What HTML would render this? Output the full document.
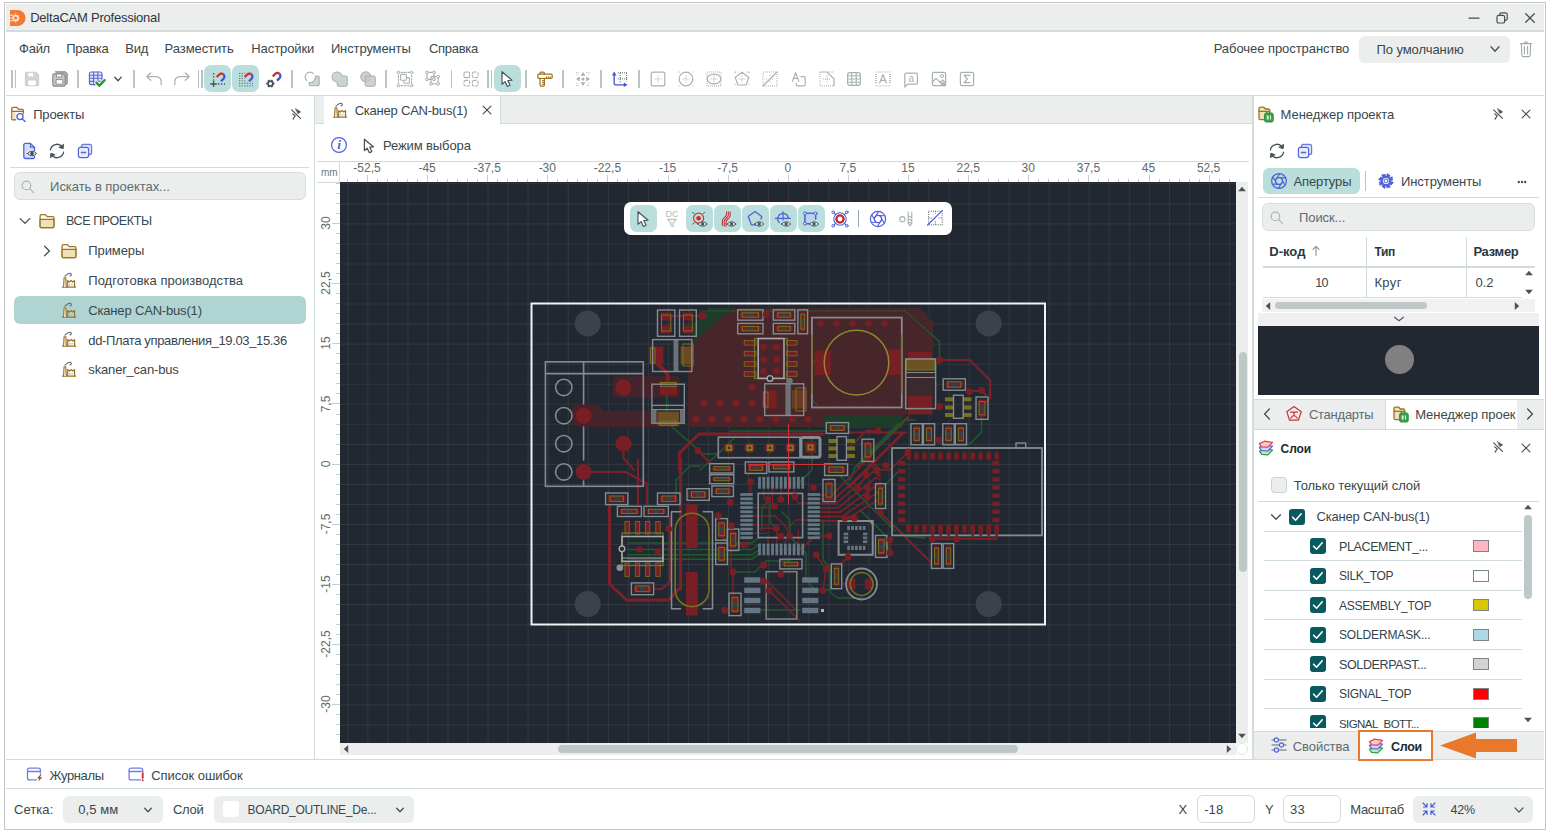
<!DOCTYPE html>
<html lang="ru"><head><meta charset="utf-8"><title>DeltaCAM Professional</title>
<style>
html,body{margin:0;padding:0}
body{width:1548px;height:835px;position:relative;overflow:hidden;background:#fff;font-family:"Liberation Sans",sans-serif;font-size:13px;color:#33424a}
.b{position:absolute;box-sizing:border-box;display:block}
.t{position:absolute;white-space:nowrap;line-height:20px;height:20px}
</style></head><body>

<div class="b" style="left:4px;top:2px;width:1542px;height:828px;background:#fff;border:1px solid #c6c6c6;"></div>
<div class="b" style="left:6px;top:4px;width:1538px;height:26px;background:#eceeed;"></div>
<div class="b" style="left:6px;top:30px;width:1538px;height:2px;background:#d3dcdb;"></div>
<span class="t" style="left:30.2px;top:8.1px;font-size:13px;color:#2b373d;font-weight:normal;letter-spacing:-0.228px;">DeltaCAM Professional</span>
<span class="t" style="left:19.1px;top:38.6px;font-size:13px;color:#38474d;font-weight:normal;letter-spacing:-0.29px;">Файл</span>
<span class="t" style="left:66.2px;top:38.6px;font-size:13px;color:#38474d;font-weight:normal;letter-spacing:-0.285px;">Правка</span>
<span class="t" style="left:125.3px;top:38.6px;font-size:13px;color:#38474d;font-weight:normal;letter-spacing:-0.273px;">Вид</span>
<span class="t" style="left:164.6px;top:38.6px;font-size:13px;color:#38474d;font-weight:normal;letter-spacing:-0.08px;">Разместить</span>
<span class="t" style="left:251.3px;top:38.6px;font-size:13px;color:#38474d;font-weight:normal;letter-spacing:-0.094px;">Настройки</span>
<span class="t" style="left:330.9px;top:38.6px;font-size:13px;color:#38474d;font-weight:normal;letter-spacing:-0.115px;">Инструменты</span>
<span class="t" style="left:429px;top:38.6px;font-size:13px;color:#38474d;font-weight:normal;letter-spacing:-0.299px;">Справка</span>
<span class="t" style="left:1213.7px;top:38.6px;font-size:13px;color:#38474d;font-weight:normal;letter-spacing:-0.057px;">Рабочее пространство</span>
<div class="b" style="left:1359px;top:36px;width:151px;height:27px;background:#eceeed;border-radius:6px;"></div>
<span class="t" style="left:1376.4px;top:39.6px;font-size:13px;color:#38474d;font-weight:normal;letter-spacing:-0.06px;">По умолчанию</span>
<div class="b" style="left:6px;top:95px;width:1538px;height:1px;background:#cfdcdb;"></div>
<div class="b" style="left:314px;top:96px;width:1px;height:663px;background:#cfdcdb;"></div>
<span class="t" style="left:33.2px;top:105.1px;font-size:13px;color:#38474d;font-weight:normal;letter-spacing:-0.166px;">Проекты</span>
<div class="b" style="left:10px;top:167px;width:299px;height:1px;background:#cfdcdb;"></div>
<div class="b" style="left:14px;top:172px;width:292px;height:28px;background:#eceeed;border:1px solid #d7dfde;border-radius:6px;"></div>
<span class="t" style="left:50.1px;top:176.6px;font-size:13px;color:#5d6b72;font-weight:normal;letter-spacing:-0.043px;">Искать в проектах...</span>
<div class="b" style="left:14px;top:296px;width:292px;height:28px;background:#afd4d2;border-radius:6px;"></div>
<span class="t" style="left:66px;top:211.1px;font-size:12.5px;color:#38474d;font-weight:normal;letter-spacing:-0.386px;">ВСЕ ПРОЕКТЫ</span>
<span class="t" style="left:88.3px;top:241.1px;font-size:13px;color:#38474d;font-weight:normal;letter-spacing:-0.097px;">Примеры</span>
<span class="t" style="left:88.3px;top:271.1px;font-size:13px;color:#38474d;font-weight:normal;letter-spacing:0.009px;">Подготовка производства</span>
<span class="t" style="left:88.3px;top:300.6px;font-size:13px;color:#38474d;font-weight:normal;letter-spacing:-0.174px;">Сканер CAN-bus(1)</span>
<span class="t" style="left:88.3px;top:330.6px;font-size:13px;color:#38474d;font-weight:normal;letter-spacing:-0.363px;">dd-Плата управления_19.03_15.36</span>
<span class="t" style="left:88.3px;top:360.1px;font-size:13px;color:#38474d;font-weight:normal;letter-spacing:-0.15px;">skaner_can-bus</span>
<div class="b" style="left:315px;top:96px;width:938px;height:28px;background:#eceeed;"></div>
<div class="b" style="left:315px;top:123px;width:938px;height:1px;background:#cfdcdb;"></div>
<div class="b" style="left:324px;top:96px;width:177px;height:28px;background:#fff;border-right:1px solid #cfdcdb;"></div>
<span class="t" style="left:354.7px;top:101.1px;font-size:13px;color:#38474d;font-weight:normal;letter-spacing:-0.222px;">Сканер CAN-bus(1)</span>
<span class="t" style="left:382.9px;top:135.6px;font-size:13px;color:#38474d;font-weight:normal;letter-spacing:-0.098px;">Режим выбора</span>
<div class="b" style="left:317px;top:161px;width:932px;height:1px;background:#cfdcdb;"></div>
<div class="b" style="left:339px;top:161px;width:1px;height:21px;background:#cfdcdb;"></div>
<div class="b" style="left:317px;top:182px;width:23px;height:1px;background:#cfdcdb;"></div>
<span class="t" style="left:321px;top:162.6px;font-size:10px;color:#6b777c;font-weight:normal;letter-spacing:0px;">mm</span>
<div class="b" style="left:340px;top:182px;width:896px;height:561px;background:#222831;"></div>
<div class="b" style="left:1236px;top:182px;width:12px;height:561px;background:#eceeed;"></div>
<div class="b" style="left:340px;top:743px;width:896px;height:12px;background:#eceeed;"></div>
<div class="b" style="left:1238.7px;top:352px;width:8px;height:220px;background:#bcc9c8;border-radius:4px;"></div>
<div class="b" style="left:558px;top:745.2px;width:460px;height:8px;background:#bcc9c8;border-radius:4px;"></div>
<div class="b" style="left:1252px;top:96px;width:2px;height:663px;background:#d3dddc;"></div>
<span class="t" style="left:1280.6px;top:105.1px;font-size:13px;color:#38474d;font-weight:normal;letter-spacing:-0.036px;">Менеджер проекта</span>
<div class="b" style="left:1263px;top:168px;width:97px;height:26px;background:#b9dedb;border-radius:6px;"></div>
<span class="t" style="left:1293.5px;top:171.6px;font-size:13px;color:#38474d;font-weight:normal;letter-spacing:-0.126px;">Апертуры</span>
<div class="b" style="left:1365px;top:171px;width:1px;height:20px;background:#b8c4c4;"></div>
<span class="t" style="left:1400.9px;top:171.6px;font-size:13px;color:#38474d;font-weight:normal;letter-spacing:-0.051px;">Инструменты</span>
<div class="b" style="left:1258px;top:197px;width:281px;height:1px;background:#cfdcdb;"></div>
<div class="b" style="left:1262px;top:203px;width:273px;height:28px;background:#eceeed;border:1px solid #d7dfde;border-radius:6px;"></div>
<span class="t" style="left:1299px;top:207.6px;font-size:13px;color:#5d6b72;font-weight:normal;letter-spacing:-0.083px;">Поиск...</span>
<span class="t" style="left:1269.3px;top:241.6px;font-size:13px;color:#2b373d;font-weight:bold;letter-spacing:0.006px;">D-код</span>
<span class="t" style="left:1374.4px;top:241.6px;font-size:12.0px;color:#2b373d;font-weight:bold;letter-spacing:-0.299px;">Тип</span>
<span class="t" style="left:1473.4px;top:241.6px;font-size:13px;color:#2b373d;font-weight:bold;letter-spacing:-0.286px;">Размер</span>
<div class="b" style="left:1366px;top:237px;width:1px;height:60px;background:#cfdcdb;"></div>
<div class="b" style="left:1466px;top:237px;width:1px;height:60px;background:#cfdcdb;"></div>
<div class="b" style="left:1263px;top:266px;width:272px;height:2px;background:#cfdcdb;"></div>
<div class="b" style="left:1263px;top:297px;width:259px;height:1px;background:#cfdcdb;"></div>
<span class="t" style="left:1315.2px;top:272.6px;font-size:12.5px;color:#38474d;font-weight:normal;letter-spacing:-0.6px;">10</span>
<span class="t" style="left:1374.4px;top:272.6px;font-size:13px;color:#38474d;font-weight:normal;letter-spacing:0.4px;">Круг</span>
<span class="t" style="left:1475.5px;top:272.6px;font-size:13px;color:#38474d;font-weight:normal;letter-spacing:0.009px;">0.2</span>
<div class="b" style="left:1262px;top:299px;width:273px;height:13px;background:#f1f1f1;"></div>
<div class="b" style="left:1275px;top:302px;width:152px;height:7px;background:#bec8c8;border-radius:4px;"></div>
<div class="b" style="left:1258px;top:313px;width:281px;height:13px;background:#efefef;"></div>
<div class="b" style="left:1258px;top:326px;width:281px;height:69px;background:#222831;"></div>
<div class="b" style="left:1385px;top:345px;width:29px;height:29px;background:#808080;border-radius:50%;"></div>
<div class="b" style="left:1254px;top:399px;width:290px;height:1px;background:#cfdcdb;"></div>
<div class="b" style="left:1254px;top:400px;width:290px;height:30px;background:#eceeed;"></div>
<div class="b" style="left:1385px;top:400px;width:132px;height:30px;background:#fff;border-left:1px solid #cfdcdb;"></div>
<span class="t" style="left:1308.9px;top:404.6px;font-size:13px;color:#5d6b72;font-weight:normal;letter-spacing:-0.24px;">Стандарты</span>
<span class="t" style="left:1415.2px;top:404.6px;font-size:13px;color:#38474d;font-weight:normal;letter-spacing:-0.057px;">Менеджер проек</span>
<div class="b" style="left:1518px;top:400px;width:26px;height:30px;background:#eceeed;"></div>
<div class="b" style="left:1254px;top:429px;width:290px;height:1px;background:#cfdcdb;"></div>
<span class="t" style="left:1280.6px;top:438.6px;font-size:12.0px;color:#1f2b30;font-weight:bold;letter-spacing:-0.084px;">Слои</span>
<div class="b" style="left:1271px;top:477px;width:16px;height:16px;background:#eceeed;border:1px solid #c9d4d3;border-radius:3.5px;"></div>
<span class="t" style="left:1293.8px;top:475.6px;font-size:13px;color:#38474d;font-weight:normal;letter-spacing:-0.075px;">Только текущий слой</span>
<div class="b" style="left:1258px;top:501px;width:281px;height:1px;background:#cfdcdb;"></div>
<span class="t" style="left:1316.6px;top:506.6px;font-size:13px;color:#38474d;font-weight:normal;letter-spacing:-0.204px;">Сканер CAN-bus(1)</span>
<div class="b" style="left:1258px;top:502px;width:281px;height:226px;overflow:hidden">
<div class="b" style="left:6px;top:29px;width:258px;height:1px;background:#cfdcdb"></div>
<div class="b" style="left:52px;top:36.0px;width:16px;height:16px;background:#085a5e;border-radius:3px"></div>
<svg class="b" style="left:52px;top:36.0px" width="16" height="16" viewBox="0 0 16 16" fill="none"><path d="M3.6 8.2l3 3 5.6-6.4" stroke="#fff" stroke-width="1.6" stroke-linecap="round" stroke-linejoin="round"/></svg>
<span class="t" style="left:81px;top:34.6px;font-size:12.5px;letter-spacing:-0.375px">PLACEMENT_...</span>
<div class="b" style="left:215px;top:38.0px;width:16px;height:12px;background:#ffb6c1;border:1px solid #7d8388"></div>
<div class="b" style="left:6px;top:58px;width:258px;height:1px;background:#cfdcdb"></div>
<div class="b" style="left:52px;top:65.5px;width:16px;height:16px;background:#085a5e;border-radius:3px"></div>
<svg class="b" style="left:52px;top:65.5px" width="16" height="16" viewBox="0 0 16 16" fill="none"><path d="M3.6 8.2l3 3 5.6-6.4" stroke="#fff" stroke-width="1.6" stroke-linecap="round" stroke-linejoin="round"/></svg>
<span class="t" style="left:81px;top:64.1px;font-size:12.0px;letter-spacing:-0.393px">SILK_TOP</span>
<div class="b" style="left:215px;top:67.5px;width:16px;height:12px;background:#ffffff;border:1px solid #7d8388"></div>
<div class="b" style="left:6px;top:88px;width:258px;height:1px;background:#cfdcdb"></div>
<div class="b" style="left:52px;top:95.0px;width:16px;height:16px;background:#085a5e;border-radius:3px"></div>
<svg class="b" style="left:52px;top:95.0px" width="16" height="16" viewBox="0 0 16 16" fill="none"><path d="M3.6 8.2l3 3 5.6-6.4" stroke="#fff" stroke-width="1.6" stroke-linecap="round" stroke-linejoin="round"/></svg>
<span class="t" style="left:81px;top:93.6px;font-size:12.0px;letter-spacing:-0.228px">ASSEMBLY_TOP</span>
<div class="b" style="left:215px;top:97.0px;width:16px;height:12px;background:#d9c800;border:1px solid #7d8388"></div>
<div class="b" style="left:6px;top:117px;width:258px;height:1px;background:#cfdcdb"></div>
<div class="b" style="left:52px;top:124.5px;width:16px;height:16px;background:#085a5e;border-radius:3px"></div>
<svg class="b" style="left:52px;top:124.5px" width="16" height="16" viewBox="0 0 16 16" fill="none"><path d="M3.6 8.2l3 3 5.6-6.4" stroke="#fff" stroke-width="1.6" stroke-linecap="round" stroke-linejoin="round"/></svg>
<span class="t" style="left:81px;top:123.1px;font-size:12.0px;letter-spacing:-0.143px">SOLDERMASK...</span>
<div class="b" style="left:215px;top:126.5px;width:16px;height:12px;background:#add8e6;border:1px solid #7d8388"></div>
<div class="b" style="left:6px;top:147px;width:258px;height:1px;background:#cfdcdb"></div>
<div class="b" style="left:52px;top:154.0px;width:16px;height:16px;background:#085a5e;border-radius:3px"></div>
<svg class="b" style="left:52px;top:154.0px" width="16" height="16" viewBox="0 0 16 16" fill="none"><path d="M3.6 8.2l3 3 5.6-6.4" stroke="#fff" stroke-width="1.6" stroke-linecap="round" stroke-linejoin="round"/></svg>
<span class="t" style="left:81px;top:152.6px;font-size:12.5px;letter-spacing:-0.366px">SOLDERPAST...</span>
<div class="b" style="left:215px;top:156.0px;width:16px;height:12px;background:#d3d3d3;border:1px solid #7d8388"></div>
<div class="b" style="left:6px;top:177px;width:258px;height:1px;background:#cfdcdb"></div>
<div class="b" style="left:52px;top:183.5px;width:16px;height:16px;background:#085a5e;border-radius:3px"></div>
<svg class="b" style="left:52px;top:183.5px" width="16" height="16" viewBox="0 0 16 16" fill="none"><path d="M3.6 8.2l3 3 5.6-6.4" stroke="#fff" stroke-width="1.6" stroke-linecap="round" stroke-linejoin="round"/></svg>
<span class="t" style="left:81px;top:182.1px;font-size:12.0px;letter-spacing:-0.284px">SIGNAL_TOP</span>
<div class="b" style="left:215px;top:185.5px;width:16px;height:12px;background:#ff0000;border:1px solid #7d8388"></div>
<div class="b" style="left:6px;top:206px;width:258px;height:1px;background:#cfdcdb"></div>
<div class="b" style="left:52px;top:213.0px;width:16px;height:16px;background:#085a5e;border-radius:3px"></div>
<svg class="b" style="left:52px;top:213.0px" width="16" height="16" viewBox="0 0 16 16" fill="none"><path d="M3.6 8.2l3 3 5.6-6.4" stroke="#fff" stroke-width="1.6" stroke-linecap="round" stroke-linejoin="round"/></svg>
<span class="t" style="left:81px;top:211.6px;font-size:11.5px;letter-spacing:-0.568px">SIGNAL_BOTT...</span>
<div class="b" style="left:215px;top:215.0px;width:16px;height:12px;background:#008000;border:1px solid #7d8388"></div>
</div>
<div class="b" style="left:1289px;top:509px;width:16px;height:16px;background:#085a5e;border-radius:3px;"></div>
<svg class="b" style="left:1289px;top:509px;" width="16" height="16" viewBox="0 0 16 16" fill="none"><path d="M3.6 8.2l3 3 5.6-6.4" stroke="#fff" stroke-width="1.6" stroke-linecap="round" stroke-linejoin="round"/></svg>
<div class="b" style="left:1524.4px;top:514.5px;width:7.6px;height:84px;background:#bcc9c8;border-radius:4px;"></div>
<div class="b" style="left:1254px;top:731px;width:290px;height:28px;background:#eceeed;border-top:1px solid #cfdcdb;"></div>
<span class="t" style="left:1292.8px;top:736.6px;font-size:13px;color:#5d6b72;font-weight:normal;letter-spacing:-0.073px;">Свойства</span>
<svg class="b" style="left:1438px;top:729px;" width="82" height="32" viewBox="0 0 82 32" fill="none"><path d="M2 16.5L38 3.5V10H79V23H38V29.5Z" fill="#e8792a"/></svg>
<div class="b" style="left:6px;top:759px;width:1538px;height:1px;background:#cfdcdb;"></div>
<div class="b" style="left:6px;top:788px;width:1538px;height:1px;background:#cfdcdb;"></div>
<span class="t" style="left:49.4px;top:765.6px;font-size:13px;color:#38474d;font-weight:normal;letter-spacing:-0.354px;">Журналы</span>
<span class="t" style="left:151.2px;top:765.6px;font-size:13px;color:#38474d;font-weight:normal;letter-spacing:-0.05px;">Список ошибок</span>
<span class="t" style="left:14.1px;top:799.6px;font-size:13px;color:#38474d;font-weight:normal;letter-spacing:0.041px;">Сетка:</span>
<div class="b" style="left:63px;top:796px;width:100px;height:27px;background:#eceeed;border-radius:6px;"></div>
<span class="t" style="left:78.3px;top:800.1px;font-size:13px;color:#38474d;font-weight:normal;letter-spacing:0.09px;">0,5 мм</span>
<span class="t" style="left:173px;top:799.6px;font-size:13px;color:#38474d;font-weight:normal;letter-spacing:-0.303px;">Слой</span>
<div class="b" style="left:214px;top:796px;width:200px;height:27px;background:#eceeed;border-radius:6px;"></div>
<div class="b" style="left:223px;top:801px;width:16px;height:16px;background:#fff;border-radius:3px;"></div>
<span class="t" style="left:247.6px;top:800.1px;font-size:12.0px;color:#38474d;font-weight:normal;letter-spacing:-0.241px;">BOARD_OUTLINE_De...</span>
<span class="t" style="left:1178.6px;top:799.6px;font-size:13px;color:#38474d;font-weight:normal;letter-spacing:0px;">X</span>
<div class="b" style="left:1197px;top:795px;width:58px;height:28px;background:#fff;border:1px solid #d3dcdb;border-radius:6px;"></div>
<span class="t" style="left:1204.2px;top:800.1px;font-size:13px;color:#38474d;font-weight:normal;letter-spacing:0.07px;">-18</span>
<span class="t" style="left:1264.9px;top:799.6px;font-size:13px;color:#38474d;font-weight:normal;letter-spacing:0px;">Y</span>
<div class="b" style="left:1283px;top:795px;width:58px;height:28px;background:#fff;border:1px solid #d3dcdb;border-radius:6px;"></div>
<span class="t" style="left:1290px;top:800.1px;font-size:13px;color:#38474d;font-weight:normal;letter-spacing:0.27px;">33</span>
<span class="t" style="left:1350.2px;top:799.6px;font-size:13px;color:#38474d;font-weight:normal;letter-spacing:-0.274px;">Масштаб</span>
<div class="b" style="left:1413px;top:796px;width:120px;height:27px;background:#eceeed;border-radius:6px;"></div>
<span class="t" style="left:1450.4px;top:800.1px;font-size:12.5px;color:#38474d;font-weight:normal;letter-spacing:-0.206px;">42%</span>
<svg class="b" style="left:340px;top:182px" width="896" height="561" viewBox="340 182 896 561" fill="none"><path d="M347.78 182V743M367.82 182V743M387.86 182V743M407.90 182V743M427.94 182V743M447.98 182V743M468.02 182V743M488.06 182V743M508.10 182V743M528.14 182V743M548.18 182V743M568.22 182V743M588.26 182V743M608.30 182V743M628.34 182V743M648.38 182V743M668.42 182V743M688.46 182V743M708.50 182V743M728.54 182V743M748.58 182V743M768.62 182V743M788.66 182V743M808.70 182V743M828.74 182V743M848.78 182V743M868.82 182V743M888.86 182V743M908.90 182V743M928.94 182V743M948.98 182V743M969.02 182V743M989.06 182V743M1009.10 182V743M1029.14 182V743M1049.18 182V743M1069.22 182V743M1089.26 182V743M1109.30 182V743M1129.34 182V743M1149.38 182V743M1169.42 182V743M1189.46 182V743M1209.50 182V743M1229.54 182V743" stroke="#fff" stroke-opacity="0.068" stroke-width="1.1"/>
<path d="M340 183.82H1236M340 203.86H1236M340 223.90H1236M340 243.94H1236M340 263.98H1236M340 284.02H1236M340 304.06H1236M340 324.10H1236M340 344.14H1236M340 364.18H1236M340 384.22H1236M340 404.26H1236M340 424.30H1236M340 444.34H1236M340 464.38H1236M340 484.42H1236M340 504.46H1236M340 524.50H1236M340 544.54H1236M340 564.58H1236M340 584.62H1236M340 604.66H1236M340 624.70H1236M340 644.74H1236M340 664.78H1236M340 684.82H1236M340 704.86H1236M340 724.90H1236" stroke="#fff" stroke-opacity="0.068" stroke-width="1.1"/>
<polygon points="709.0,308.0 732.0,308.0 692.0,345.0 692.0,326.0" fill="#1d3d2a"/>
<polygon points="688.0,346.0 692.0,344.0 732.0,308.0 920.0,308.0 933.0,321.0 933.0,352.0 905.0,352.0 905.0,415.0 823.0,415.0 823.0,427.0 688.0,427.0" fill="#46262a"/>
<rect x="823.0" y="415.0" width="80.0" height="13.0" fill="#1d3d2a"/>
<rect x="905.0" y="352.0" width="28.0" height="63.0" fill="#3a2a2e"/>
<rect x="612.7" y="376.2" width="66.8" height="21.6" fill="#44242a" rx="3"/>
<polygon points="572.0,408.0 578.0,404.0 596.0,404.0 604.0,411.0 680.0,411.0 680.0,427.0 578.0,427.0 572.0,423.0" fill="#44242a"/>
<circle cx="587.7" cy="323.4" r="13" fill="#3c424a"/>
<circle cx="988.7" cy="323.4" r="13" fill="#3c424a"/>
<circle cx="587.7" cy="604.0" r="13" fill="#3c424a"/>
<circle cx="988.7" cy="604.0" r="13" fill="#3c424a"/>
<polyline points="666.6,395.0 666.6,421.0 671.0,426.0 703.0,454.0 718.0,454.0" fill="none" stroke="#1f5a2c" stroke-width="1.5" stroke-linejoin="round" stroke-linecap="round"/>
<polyline points="931.0,334.0 939.5,342.0 939.5,357.0" fill="none" stroke="#1f5a2c" stroke-width="1.5" stroke-linejoin="round" stroke-linecap="round"/>
<polyline points="700.0,311.0 905.0,311.0 931.0,334.0" fill="none" stroke="#1f5a2c" stroke-width="1.2" stroke-linejoin="round" stroke-linecap="round"/>
<polyline points="981.5,417.0 981.5,432.0 970.0,444.0 940.0,444.0" fill="none" stroke="#1f5a2c" stroke-width="1.5" stroke-linejoin="round" stroke-linecap="round"/>
<polyline points="628.0,543.0 752.0,543.0 760.0,537.0" fill="none" stroke="#1f5a2c" stroke-width="1.5" stroke-linejoin="round" stroke-linecap="round"/>
<polyline points="628.0,549.5 752.0,549.5 760.0,543.5" fill="none" stroke="#1f5a2c" stroke-width="1.5" stroke-linejoin="round" stroke-linecap="round"/>
<polyline points="628.0,554.8 752.0,554.8 760.0,548.8" fill="none" stroke="#1f5a2c" stroke-width="1.5" stroke-linejoin="round" stroke-linecap="round"/>
<polyline points="628.0,559.2 752.0,559.2 760.0,553.2" fill="none" stroke="#1f5a2c" stroke-width="1.5" stroke-linejoin="round" stroke-linecap="round"/>
<polyline points="700.0,470.0 718.0,454.0 735.0,437.0" fill="none" stroke="#1f5a2c" stroke-width="1.5" stroke-linejoin="round" stroke-linecap="round"/>
<polyline points="676.0,500.0 676.0,480.0 690.0,466.0 700.0,466.0" fill="none" stroke="#1f5a2c" stroke-width="1.5" stroke-linejoin="round" stroke-linecap="round"/>
<polyline points="770.0,500.0 762.0,508.0 762.0,530.0" fill="none" stroke="#1f5a2c" stroke-width="1.5" stroke-linejoin="round" stroke-linecap="round"/>
<polyline points="789.0,536.0 806.0,553.0 806.0,580.0 815.0,590.0 830.0,590.0" fill="none" stroke="#1f5a2c" stroke-width="1.5" stroke-linejoin="round" stroke-linecap="round"/>
<polyline points="823.0,520.0 823.0,560.0 830.0,568.0 830.0,592.0 838.0,598.0 862.0,598.0" fill="none" stroke="#1f5a2c" stroke-width="1.5" stroke-linejoin="round" stroke-linecap="round"/>
<polyline points="860.0,510.0 885.0,535.0 885.0,545.0 892.0,552.0" fill="none" stroke="#1f5a2c" stroke-width="1.5" stroke-linejoin="round" stroke-linecap="round"/>
<polyline points="894.0,525.0 905.0,536.0 925.0,538.0" fill="none" stroke="#1f5a2c" stroke-width="1.5" stroke-linejoin="round" stroke-linecap="round"/>
<polyline points="840.0,476.0 860.0,496.0 875.0,511.0 895.0,531.0" fill="none" stroke="#1f5a2c" stroke-width="1.5" stroke-linejoin="round" stroke-linecap="round"/>
<polyline points="900.0,470.0 880.0,490.0" fill="none" stroke="#1f5a2c" stroke-width="1.5" stroke-linejoin="round" stroke-linecap="round"/>
<polyline points="733.0,572.0 755.0,572.0 766.0,561.0 790.0,561.0" fill="none" stroke="#1f5a2c" stroke-width="1.5" stroke-linejoin="round" stroke-linecap="round"/>
<polyline points="744.0,610.0 800.0,610.0" fill="none" stroke="#1f5a2c" stroke-width="1.5" stroke-linejoin="round" stroke-linecap="round"/>
<polyline points="812.0,436.0 812.0,470.0 800.0,482.0" fill="none" stroke="#1f5a2c" stroke-width="1.5" stroke-linejoin="round" stroke-linecap="round"/>
<polyline points="824.0,352.0 812.0,364.0 812.0,400.0 822.0,410.0" fill="none" stroke="#1f5a2c" stroke-width="1.5" stroke-linejoin="round" stroke-linecap="round"/>
<polyline points="679.5,470.0 679.5,452.8 699.0,434.0 824.0,434.0" fill="none" stroke="#7d2128" stroke-width="3" stroke-linejoin="round" stroke-linecap="round"/>
<polyline points="849.0,432.5 906.0,432.5" fill="none" stroke="#7d2128" stroke-width="2" stroke-linejoin="round" stroke-linecap="round"/>
<polyline points="730.0,431.0 826.0,431.0" fill="none" stroke="#1f5a2c" stroke-width="1.5" stroke-linejoin="round" stroke-linecap="round"/>
<polyline points="623.5,443.7 623.5,458.0 634.0,470.0" fill="none" stroke="#7d2128" stroke-width="2" stroke-linejoin="round" stroke-linecap="round"/>
<polyline points="591.0,472.0 625.6,472.0 647.0,483.7 647.0,506.0" fill="none" stroke="#7d2128" stroke-width="2" stroke-linejoin="round" stroke-linecap="round"/>
<polyline points="638.0,460.0 638.0,506.0" fill="none" stroke="#7d2128" stroke-width="2" stroke-linejoin="round" stroke-linecap="round"/>
<polyline points="680.6,460.0 680.6,589.0" fill="none" stroke="#7d2128" stroke-width="3" stroke-linejoin="round" stroke-linecap="round"/>
<polyline points="609.5,505.0 609.5,584.0 626.7,600.0 668.7,600.0 680.6,587.0" fill="none" stroke="#7d2128" stroke-width="3" stroke-linejoin="round" stroke-linecap="round"/>
<polyline points="653.6,589.0 662.0,589.0 669.8,581.8 669.8,516.5" fill="none" stroke="#7d2128" stroke-width="2" stroke-linejoin="round" stroke-linecap="round"/>
<polyline points="658.0,364.4 667.7,374.0 667.7,385.0" fill="none" stroke="#7d2128" stroke-width="4" stroke-linejoin="round" stroke-linecap="round"/>
<polyline points="697.8,450.6 710.0,463.0" fill="none" stroke="#7d2128" stroke-width="2" stroke-linejoin="round" stroke-linecap="round"/>
<polyline points="702.0,316.0 672.0,316.0" fill="none" stroke="#7d2128" stroke-width="2" stroke-linejoin="round" stroke-linecap="round"/>
<polyline points="939.5,360.0 969.7,360.0 990.2,380.5 990.2,398.0 984.0,404.0" fill="none" stroke="#7d2128" stroke-width="2" stroke-linejoin="round" stroke-linecap="round"/>
<polyline points="969.0,391.0 981.5,391.0 986.0,395.0" fill="none" stroke="#7d2128" stroke-width="2" stroke-linejoin="round" stroke-linecap="round"/>
<polyline points="908.0,417.0 858.0,467.0" fill="none" stroke="#7d2128" stroke-width="2.5" stroke-linejoin="round" stroke-linecap="round"/>
<polyline points="903.0,433.0 849.0,487.0" fill="none" stroke="#7d2128" stroke-width="2.5" stroke-linejoin="round" stroke-linecap="round"/>
<polyline points="915.0,420.0 905.0,420.0 862.0,463.0" fill="none" stroke="#1f5a2c" stroke-width="1.5" stroke-linejoin="round" stroke-linecap="round"/>
<polyline points="898.0,424.0 855.0,467.0 850.0,480.0" fill="none" stroke="#1f5a2c" stroke-width="1.5" stroke-linejoin="round" stroke-linecap="round"/>
<polyline points="878.0,431.0 866.0,431.0 851.0,446.0" fill="none" stroke="#7d2128" stroke-width="2" stroke-linejoin="round" stroke-linecap="round"/>
<polyline points="880.2,512.8 931.0,562.4" fill="none" stroke="#7d2128" stroke-width="2" stroke-linejoin="round" stroke-linecap="round"/>
<polyline points="931.0,538.7 996.6,538.7" fill="none" stroke="#7d2128" stroke-width="2" stroke-linejoin="round" stroke-linecap="round"/>
<polyline points="733.0,572.0 733.0,595.0" fill="none" stroke="#7d2128" stroke-width="1.5" stroke-linejoin="round" stroke-linecap="round"/>
<polyline points="731.0,526.0 731.0,572.0" fill="none" stroke="#7d2128" stroke-width="1.5" stroke-linejoin="round" stroke-linecap="round"/>
<polyline points="820.0,495.0 832.0,495.0 868.0,459.0 880.0,470.0" fill="none" stroke="#7d2128" stroke-width="1.7" stroke-linejoin="round" stroke-linecap="round"/>
<polyline points="820.0,499.3 834.0,499.3 870.5,465.3 880.0,473.0" fill="none" stroke="#7d2128" stroke-width="1.7" stroke-linejoin="round" stroke-linecap="round"/>
<polyline points="820.0,503.6 836.0,503.6 873.0,471.6 880.0,476.0" fill="none" stroke="#7d2128" stroke-width="1.7" stroke-linejoin="round" stroke-linecap="round"/>
<polyline points="820.0,507.9 838.0,507.9 875.5,477.9 880.0,479.0" fill="none" stroke="#7d2128" stroke-width="1.7" stroke-linejoin="round" stroke-linecap="round"/>
<polyline points="820.0,512.2 840.0,512.2 878.0,484.2 880.0,482.0" fill="none" stroke="#7d2128" stroke-width="1.7" stroke-linejoin="round" stroke-linecap="round"/>
<polyline points="820.0,516.5 842.0,516.5 880.5,490.5 880.0,485.0" fill="none" stroke="#7d2128" stroke-width="1.7" stroke-linejoin="round" stroke-linecap="round"/>
<polyline points="820.0,520.8 844.0,520.8 883.0,496.8 880.0,488.0" fill="none" stroke="#7d2128" stroke-width="1.7" stroke-linejoin="round" stroke-linecap="round"/>
<polyline points="744.2,545.0 730.0,545.0 722.0,537.0" fill="none" stroke="#7d2128" stroke-width="1.5" stroke-linejoin="round" stroke-linecap="round"/>
<polyline points="752.8,507.5 768.0,507.5" fill="none" stroke="#7d2128" stroke-width="1.3" stroke-linejoin="round" stroke-linecap="round"/>
<polyline points="752.8,516.0 775.0,516.0" fill="none" stroke="#7d2128" stroke-width="1.3" stroke-linejoin="round" stroke-linecap="round"/>
<polyline points="752.8,524.8 770.0,524.8" fill="none" stroke="#7d2128" stroke-width="1.3" stroke-linejoin="round" stroke-linecap="round"/>
<polyline points="752.8,533.4 766.0,533.4" fill="none" stroke="#7d2128" stroke-width="1.3" stroke-linejoin="round" stroke-linecap="round"/>
<polyline points="763.8,488.7 763.8,499.0" fill="none" stroke="#7d2128" stroke-width="1.3" stroke-linejoin="round" stroke-linecap="round"/>
<polyline points="772.5,488.7 772.5,504.0" fill="none" stroke="#7d2128" stroke-width="1.3" stroke-linejoin="round" stroke-linecap="round"/>
<polyline points="781.0,488.7 781.0,499.0" fill="none" stroke="#7d2128" stroke-width="1.3" stroke-linejoin="round" stroke-linecap="round"/>
<polyline points="794.0,488.7 794.0,496.0" fill="none" stroke="#7d2128" stroke-width="1.3" stroke-linejoin="round" stroke-linecap="round"/>
<polyline points="768.0,543.6 768.0,536.0" fill="none" stroke="#7d2128" stroke-width="1.3" stroke-linejoin="round" stroke-linecap="round"/>
<polyline points="776.8,543.6 776.8,529.0" fill="none" stroke="#7d2128" stroke-width="1.3" stroke-linejoin="round" stroke-linecap="round"/>
<polyline points="785.4,543.6 785.4,537.0" fill="none" stroke="#7d2128" stroke-width="1.3" stroke-linejoin="round" stroke-linecap="round"/>
<polyline points="798.4,543.6 798.4,530.0" fill="none" stroke="#7d2128" stroke-width="1.3" stroke-linejoin="round" stroke-linecap="round"/>
<polyline points="768.0,507.5 774.4,506.3" fill="none" stroke="#7d2128" stroke-width="1.3" stroke-linejoin="round" stroke-linecap="round"/>
<polyline points="775.0,516.0 786.0,527.0 789.5,535.9" fill="none" stroke="#7d2128" stroke-width="1.3" stroke-linejoin="round" stroke-linecap="round"/>
<polyline points="807.6,503.0 798.0,503.0 794.8,496.6" fill="none" stroke="#7d2128" stroke-width="1.3" stroke-linejoin="round" stroke-linecap="round"/>
<polyline points="807.6,520.0 796.0,520.0 790.0,526.0" fill="none" stroke="#7d2128" stroke-width="1.3" stroke-linejoin="round" stroke-linecap="round"/>
<polyline points="770.0,500.0 770.0,522.0 776.0,528.0" fill="none" stroke="#1f5a2c" stroke-width="1.4" stroke-linejoin="round" stroke-linecap="round"/>
<polyline points="782.0,512.0 790.0,520.0 790.0,534.0" fill="none" stroke="#1f5a2c" stroke-width="1.4" stroke-linejoin="round" stroke-linecap="round"/>
<polyline points="750.6,481.6 750.6,492.0" fill="none" stroke="#7d2128" stroke-width="1.5" stroke-linejoin="round" stroke-linecap="round"/>
<polyline points="776.5,528.3 760.0,528.3" fill="none" stroke="#7d2128" stroke-width="1.5" stroke-linejoin="round" stroke-linecap="round"/>
<polyline points="769.0,590.4 800.0,621.0" fill="none" stroke="#7d2128" stroke-width="1.5" stroke-linejoin="round" stroke-linecap="round"/>
<polyline points="766.0,580.0 796.0,610.0" fill="none" stroke="#7d2128" stroke-width="1.5" stroke-linejoin="round" stroke-linecap="round"/>
<polyline points="829.0,536.0 815.0,536.0 800.0,550.0 780.0,550.0" fill="none" stroke="#7d2128" stroke-width="1.5" stroke-linejoin="round" stroke-linecap="round"/>
<polyline points="816.0,555.0 826.0,569.0 823.0,590.0" fill="none" stroke="#7d2128" stroke-width="1.5" stroke-linejoin="round" stroke-linecap="round"/>
<polyline points="848.0,557.0 840.0,565.0 836.0,565.0" fill="none" stroke="#7d2128" stroke-width="1.5" stroke-linejoin="round" stroke-linecap="round"/>
<polyline points="841.7,584.0 846.0,584.0" fill="none" stroke="#7d2128" stroke-width="1.5" stroke-linejoin="round" stroke-linecap="round"/>
<polyline points="890.0,540.0 890.0,553.0" fill="none" stroke="#7d2128" stroke-width="1.5" stroke-linejoin="round" stroke-linecap="round"/>
<polyline points="844.7,518.2 854.4,518.2 862.0,522.0" fill="none" stroke="#7d2128" stroke-width="1.5" stroke-linejoin="round" stroke-linecap="round"/>
<polyline points="908.0,452.0 900.0,460.0 890.0,470.0 878.0,470.0" fill="none" stroke="#7d2128" stroke-width="1.5" stroke-linejoin="round" stroke-linecap="round"/>
<rect x="545.4" y="361.8" width="97.9" height="124.5" fill="none" stroke="#868b91" stroke-width="1.6"/>
<polyline points="545.4,373.6 643.3,373.6" fill="none" stroke="#868b91" stroke-width="1.6" stroke-linejoin="round" stroke-linecap="round"/>
<polyline points="583.6,361.8 583.6,404.0" fill="none" stroke="#868b91" stroke-width="1.6" stroke-linejoin="round" stroke-linecap="round"/>
<polyline points="583.6,427.0 583.6,460.0" fill="none" stroke="#868b91" stroke-width="1.6" stroke-linejoin="round" stroke-linecap="round"/>
<polyline points="583.6,481.0 583.6,486.0" fill="none" stroke="#868b91" stroke-width="1.6" stroke-linejoin="round" stroke-linecap="round"/>
<circle cx="563.8" cy="387.4" r="8.2" fill="none" stroke="#868b91" stroke-width="1.6"/>
<circle cx="563.8" cy="415.7" r="8.2" fill="none" stroke="#868b91" stroke-width="1.6"/>
<circle cx="563.8" cy="443.7" r="8.2" fill="none" stroke="#868b91" stroke-width="1.6"/>
<circle cx="563.8" cy="471.9" r="8.2" fill="none" stroke="#868b91" stroke-width="1.6"/>
<circle cx="623.5" cy="387.4" r="8" fill="#771f25"/>
<circle cx="583.6" cy="415.7" r="8" fill="#771f25"/>
<circle cx="623.5" cy="443.7" r="8" fill="#771f25"/>
<circle cx="583.6" cy="471.9" r="8" fill="#771f25"/>
<rect x="660.5" y="312.5" width="11.3" height="8.0" fill="#771f25"/>
<rect x="660.5" y="325.5" width="11.3" height="8.0" fill="#771f25"/>
<rect x="661.5" y="315.0" width="9.3" height="16.0" fill="none" stroke="#787021" stroke-width="1"/>
<rect x="657.5" y="310.0" width="17.3" height="26.3" fill="none" stroke="#868b91" stroke-width="1.4"/>
<rect x="682.5" y="312.5" width="10.8" height="8.0" fill="#771f25"/>
<rect x="682.5" y="325.5" width="10.8" height="8.0" fill="#771f25"/>
<rect x="683.5" y="315.0" width="8.8" height="16.0" fill="none" stroke="#787021" stroke-width="1"/>
<rect x="679.5" y="310.0" width="16.8" height="26.3" fill="none" stroke="#868b91" stroke-width="1.4"/>
<circle cx="702.2" cy="315.9" r="3.8" fill="#771f25"/>
<rect x="649.3" y="346.5" width="14.1" height="17.9" fill="#771f25"/>
<rect x="650.5" y="348.0" width="4.5" height="15.0" fill="none" stroke="#787021" stroke-width="1"/>
<rect x="680.6" y="346.5" width="12.9" height="17.9" fill="#6b4a22"/>
<rect x="683.0" y="344.0" width="10.0" height="22.0" fill="none" stroke="#787021" stroke-width="1"/>
<rect x="673.5" y="339.6" width="4.9" height="31.9" fill="#6d7177"/>
<rect x="652.6" y="339.6" width="39.2" height="31.9" fill="none" stroke="#868b91" stroke-width="1.4"/>
<rect x="659.7" y="381.6" width="17.3" height="13.4" fill="#771f25"/>
<rect x="660.5" y="382.5" width="15.5" height="4.0" fill="none" stroke="#787021" stroke-width="1"/>
<rect x="657.5" y="411.8" width="21.5" height="14.0" fill="#6e4f24"/>
<rect x="660.5" y="421.0" width="15.5" height="4.5" fill="none" stroke="#787021" stroke-width="1"/>
<rect x="651.9" y="384.2" width="32.4" height="39.0" fill="none" stroke="#868b91" stroke-width="1.4"/>
<polyline points="652.0,405.3 684.0,405.3" fill="none" stroke="#868b91" stroke-width="1.2" stroke-linejoin="round" stroke-linecap="round"/>
<polyline points="652.0,409.6 684.0,409.6" fill="none" stroke="#868b91" stroke-width="1.2" stroke-linejoin="round" stroke-linecap="round"/>
<rect x="652.0" y="410.0" width="4.5" height="13.0" fill="#6d7177"/>
<rect x="680.0" y="410.0" width="4.3" height="13.0" fill="#6d7177"/>
<rect x="740.7" y="312.8" width="19.3" height="4.4" fill="#3a3f46"/>
<rect x="740.2" y="312.3" width="6.8" height="5.4" fill="#771f25"/>
<rect x="753.7" y="312.3" width="6.8" height="5.4" fill="#771f25"/>
<rect x="742.2" y="312.8" width="16.3" height="4.4" fill="none" stroke="#787021" stroke-width="1"/>
<rect x="737.7" y="309.8" width="25.3" height="10.4" fill="none" stroke="#868b91" stroke-width="1.4"/>
<rect x="740.7" y="326.4" width="19.3" height="4.4" fill="#3a3f46"/>
<rect x="740.2" y="325.9" width="6.8" height="5.4" fill="#771f25"/>
<rect x="753.7" y="325.9" width="6.8" height="5.4" fill="#771f25"/>
<rect x="742.2" y="326.4" width="16.3" height="4.4" fill="none" stroke="#787021" stroke-width="1"/>
<rect x="737.7" y="323.4" width="25.3" height="10.4" fill="none" stroke="#868b91" stroke-width="1.4"/>
<rect x="776.3" y="312.8" width="15.5" height="4.4" fill="#3a3f46"/>
<rect x="775.8" y="312.3" width="5.8" height="5.4" fill="#771f25"/>
<rect x="786.5" y="312.3" width="5.8" height="5.4" fill="#771f25"/>
<rect x="777.8" y="312.8" width="12.5" height="4.4" fill="none" stroke="#787021" stroke-width="1"/>
<rect x="773.3" y="309.8" width="21.5" height="10.4" fill="none" stroke="#868b91" stroke-width="1.4"/>
<rect x="776.3" y="326.4" width="15.5" height="4.4" fill="#3a3f46"/>
<rect x="775.8" y="325.9" width="5.8" height="5.4" fill="#771f25"/>
<rect x="786.5" y="325.9" width="5.8" height="5.4" fill="#771f25"/>
<rect x="777.8" y="326.4" width="12.5" height="4.4" fill="none" stroke="#787021" stroke-width="1"/>
<rect x="773.3" y="323.4" width="21.5" height="10.4" fill="none" stroke="#868b91" stroke-width="1.4"/>
<rect x="800.9" y="312.8" width="3.7" height="18.0" fill="#3a3f46"/>
<rect x="800.4" y="312.3" width="4.7" height="6.5" fill="#771f25"/>
<rect x="800.4" y="324.8" width="4.7" height="6.5" fill="#771f25"/>
<rect x="800.9" y="314.3" width="3.7" height="15.0" fill="none" stroke="#787021" stroke-width="1"/>
<rect x="797.9" y="309.8" width="9.7" height="24.0" fill="none" stroke="#868b91" stroke-width="1.4"/>
<circle cx="766.0" cy="314.6" r="3.3" fill="#771f25"/>
<rect x="744.2" y="340.5" width="11.8" height="4.6" fill="#771f25" stroke="#787021" stroke-width="0.8"/>
<rect x="786.5" y="340.5" width="10.5" height="4.6" fill="#771f25" stroke="#787021" stroke-width="0.8"/>
<rect x="744.2" y="351.3" width="11.8" height="4.6" fill="#771f25" stroke="#787021" stroke-width="0.8"/>
<rect x="786.5" y="351.3" width="10.5" height="4.6" fill="#771f25" stroke="#787021" stroke-width="0.8"/>
<rect x="744.2" y="361.7" width="11.8" height="4.6" fill="#771f25" stroke="#787021" stroke-width="0.8"/>
<rect x="786.5" y="361.7" width="10.5" height="4.6" fill="#771f25" stroke="#787021" stroke-width="0.8"/>
<rect x="744.2" y="371.7" width="11.8" height="4.6" fill="#771f25" stroke="#787021" stroke-width="0.8"/>
<rect x="786.5" y="371.7" width="10.5" height="4.6" fill="#771f25" stroke="#787021" stroke-width="0.8"/>
<rect x="754.5" y="338.5" width="32.8" height="39.9" fill="none" stroke="#787021" stroke-width="1.2"/>
<rect x="758.2" y="338.5" width="25.8" height="39.9" fill="none" stroke="#a5a8ac" stroke-width="1.6"/>
<circle cx="763.6" cy="347.0" r="3.4" fill="#771f25"/>
<circle cx="763.6" cy="359.6" r="3.4" fill="#771f25"/>
<circle cx="763.6" cy="371.5" r="3.4" fill="#771f25"/>
<circle cx="776.5" cy="347.0" r="3.4" fill="#771f25"/>
<circle cx="776.5" cy="359.6" r="3.4" fill="#771f25"/>
<circle cx="776.5" cy="371.5" r="3.4" fill="#771f25"/>
<circle cx="770.0" cy="378.4" r="2.8" fill="#222831" stroke="#a5a8ac" stroke-width="1.4"/>
<rect x="762.5" y="390.2" width="14.0" height="18.4" fill="#771f25"/>
<rect x="763.5" y="392.0" width="4.5" height="15.0" fill="none" stroke="#787021" stroke-width="1"/>
<rect x="791.9" y="390.2" width="14.0" height="18.4" fill="#6b3a24"/>
<rect x="796.0" y="388.0" width="10.0" height="23.0" fill="none" stroke="#787021" stroke-width="1"/>
<rect x="785.4" y="383.8" width="5.4" height="31.7" fill="#6d7177"/>
<rect x="764.7" y="383.8" width="39.0" height="31.7" fill="none" stroke="#868b91" stroke-width="1.4"/>
<circle cx="789.5" cy="381.0" r="3.3" fill="#70757b"/>
<circle cx="703.7" cy="403.2" r="3.4" fill="#771f25"/>
<circle cx="719.8" cy="403.2" r="3.4" fill="#771f25"/>
<circle cx="736.0" cy="403.2" r="3.4" fill="#771f25"/>
<circle cx="752.2" cy="403.2" r="3.4" fill="#771f25"/>
<circle cx="695.7" cy="419.3" r="3.4" fill="#771f25"/>
<circle cx="711.9" cy="419.3" r="3.4" fill="#771f25"/>
<circle cx="728.0" cy="419.3" r="3.4" fill="#771f25"/>
<circle cx="744.2" cy="419.3" r="3.4" fill="#771f25"/>
<circle cx="760.0" cy="419.3" r="3.4" fill="#771f25"/>
<circle cx="776.0" cy="419.3" r="3.4" fill="#771f25"/>
<circle cx="792.5" cy="419.3" r="3.4" fill="#771f25"/>
<circle cx="808.0" cy="419.3" r="3.4" fill="#771f25"/>
<circle cx="752.2" cy="387.4" r="3.4" fill="#771f25"/>
<circle cx="697.8" cy="450.6" r="3.5" fill="#771f25"/>
<rect x="814.5" y="350.4" width="16.2" height="24.6" fill="#771f25"/>
<rect x="887.8" y="349.3" width="12.9" height="25.7" fill="#771f25"/>
<circle cx="820.5" cy="323.4" r="3.2" fill="#771f25"/>
<circle cx="820.5" cy="407.5" r="3.2" fill="#5a2328"/>
<circle cx="836.5" cy="323.4" r="3.2" fill="#771f25"/>
<circle cx="836.5" cy="407.5" r="3.2" fill="#5a2328"/>
<circle cx="852.4" cy="323.4" r="3.2" fill="#771f25"/>
<circle cx="852.4" cy="407.5" r="3.2" fill="#5a2328"/>
<circle cx="868.4" cy="323.4" r="3.2" fill="#771f25"/>
<circle cx="868.4" cy="407.5" r="3.2" fill="#5a2328"/>
<circle cx="884.5" cy="323.4" r="3.2" fill="#771f25"/>
<circle cx="884.5" cy="407.5" r="3.2" fill="#5a2328"/>
<rect x="811.9" y="317.6" width="89.9" height="89.9" fill="none" stroke="#868b91" stroke-width="1.8"/>
<polyline points="812.0,335.0 812.0,393.0" fill="none" stroke="#787021" stroke-width="1.4" stroke-linejoin="round" stroke-linecap="round"/>
<polyline points="901.8,335.0 901.8,393.0" fill="none" stroke="#787021" stroke-width="1.4" stroke-linejoin="round" stroke-linecap="round"/>
<circle cx="856.5" cy="362.6" r="32.3" fill="none" stroke="#8f8a2a" stroke-width="1.5"/>
<rect x="908.0" y="352.0" width="24.0" height="14.0" fill="#771f25"/>
<rect x="908.0" y="396.0" width="24.0" height="18.0" fill="#771f25"/>
<rect x="906.5" y="359.0" width="28.5" height="11.0" fill="#6e5322" stroke="#787021" stroke-width="1"/>
<rect x="905.7" y="359.0" width="29.9" height="49.6" fill="none" stroke="#868b91" stroke-width="1.5"/>
<polyline points="906.0,372.5 935.0,372.5" fill="none" stroke="#868b91" stroke-width="1.2" stroke-linejoin="round" stroke-linecap="round"/>
<polyline points="906.0,377.5 935.0,377.5" fill="none" stroke="#868b91" stroke-width="1.2" stroke-linejoin="round" stroke-linecap="round"/>
<circle cx="939.5" cy="360.0" r="3.5" fill="#771f25"/>
<circle cx="939.5" cy="406.4" r="3.5" fill="#771f25"/>
<rect x="946.2" y="381.8" width="16.2" height="5.4" fill="#3a3f46"/>
<rect x="945.7" y="381.3" width="6.0" height="6.4" fill="#771f25"/>
<rect x="956.9" y="381.3" width="6.0" height="6.4" fill="#771f25"/>
<rect x="947.7" y="381.8" width="13.2" height="5.4" fill="none" stroke="#787021" stroke-width="1"/>
<rect x="943.2" y="378.8" width="22.2" height="11.4" fill="none" stroke="#868b91" stroke-width="1.4"/>
<rect x="945.0" y="397.3" width="8.5" height="4.0" fill="#787021"/>
<rect x="963.0" y="397.3" width="8.5" height="4.0" fill="#787021"/>
<rect x="945.0" y="405.5" width="8.5" height="4.0" fill="#787021"/>
<rect x="963.0" y="405.5" width="8.5" height="4.0" fill="#787021"/>
<rect x="945.0" y="413.0" width="8.5" height="4.0" fill="#787021"/>
<rect x="963.0" y="413.0" width="8.5" height="4.0" fill="#787021"/>
<rect x="953.5" y="395.2" width="9.7" height="23.1" fill="none" stroke="#868b91" stroke-width="1.4"/>
<rect x="979.0" y="400.0" width="6.0" height="16.3" fill="#3a3f46"/>
<rect x="978.5" y="399.5" width="7.0" height="6.0" fill="#771f25"/>
<rect x="978.5" y="410.8" width="7.0" height="6.0" fill="#771f25"/>
<rect x="979.0" y="401.5" width="6.0" height="13.3" fill="none" stroke="#787021" stroke-width="1"/>
<rect x="976.0" y="397.0" width="12.0" height="22.3" fill="none" stroke="#868b91" stroke-width="1.4"/>
<circle cx="969.3" cy="391.3" r="3.4" fill="#771f25"/>
<circle cx="981.5" cy="390.2" r="3.4" fill="#771f25"/>
<rect x="829.3" y="425.6" width="16.2" height="4.8" fill="#3a3f46"/>
<rect x="828.8" y="425.1" width="6.0" height="5.8" fill="#771f25"/>
<rect x="840.0" y="425.1" width="6.0" height="5.8" fill="#771f25"/>
<rect x="830.8" y="425.6" width="13.2" height="4.8" fill="none" stroke="#787021" stroke-width="1"/>
<rect x="826.3" y="422.6" width="22.2" height="10.8" fill="none" stroke="#868b91" stroke-width="1.4"/>
<rect x="828.5" y="439.0" width="8.5" height="4.0" fill="#787021"/>
<rect x="846.5" y="439.0" width="8.5" height="4.0" fill="#787021"/>
<rect x="828.5" y="446.5" width="8.5" height="4.0" fill="#787021"/>
<rect x="846.5" y="446.5" width="8.5" height="4.0" fill="#787021"/>
<rect x="828.5" y="454.0" width="8.5" height="4.0" fill="#787021"/>
<rect x="846.5" y="454.0" width="8.5" height="4.0" fill="#787021"/>
<rect x="837.0" y="436.6" width="9.4" height="23.7" fill="none" stroke="#868b91" stroke-width="1.4"/>
<rect x="865.0" y="442.2" width="5.8" height="16.2" fill="#3a3f46"/>
<rect x="864.5" y="441.7" width="6.8" height="6.0" fill="#771f25"/>
<rect x="864.5" y="452.9" width="6.8" height="6.0" fill="#771f25"/>
<rect x="865.0" y="443.7" width="5.8" height="13.2" fill="none" stroke="#787021" stroke-width="1"/>
<rect x="862.0" y="439.2" width="11.8" height="22.2" fill="none" stroke="#868b91" stroke-width="1.4"/>
<rect x="914.0" y="426.7" width="5.3" height="15.1" fill="#3a3f46"/>
<rect x="913.5" y="426.2" width="6.3" height="5.7" fill="#771f25"/>
<rect x="913.5" y="436.6" width="6.3" height="5.7" fill="#771f25"/>
<rect x="914.0" y="428.2" width="5.3" height="12.1" fill="none" stroke="#787021" stroke-width="1"/>
<rect x="911.0" y="423.7" width="11.3" height="21.1" fill="none" stroke="#868b91" stroke-width="1.4"/>
<rect x="926.4" y="426.7" width="5.2" height="15.1" fill="#3a3f46"/>
<rect x="925.9" y="426.2" width="6.2" height="5.7" fill="#771f25"/>
<rect x="925.9" y="436.6" width="6.2" height="5.7" fill="#771f25"/>
<rect x="926.4" y="428.2" width="5.2" height="12.1" fill="none" stroke="#787021" stroke-width="1"/>
<rect x="923.4" y="423.7" width="11.2" height="21.1" fill="none" stroke="#868b91" stroke-width="1.4"/>
<rect x="945.8" y="426.7" width="5.4" height="15.1" fill="#3a3f46"/>
<rect x="945.3" y="426.2" width="6.4" height="5.7" fill="#771f25"/>
<rect x="945.3" y="436.6" width="6.4" height="5.7" fill="#771f25"/>
<rect x="945.8" y="428.2" width="5.4" height="12.1" fill="none" stroke="#787021" stroke-width="1"/>
<rect x="942.8" y="423.7" width="11.4" height="21.1" fill="none" stroke="#868b91" stroke-width="1.4"/>
<rect x="958.3" y="426.7" width="5.2" height="15.1" fill="#3a3f46"/>
<rect x="957.8" y="426.2" width="6.2" height="5.7" fill="#771f25"/>
<rect x="957.8" y="436.6" width="6.2" height="5.7" fill="#771f25"/>
<rect x="958.3" y="428.2" width="5.2" height="12.1" fill="none" stroke="#787021" stroke-width="1"/>
<rect x="955.3" y="423.7" width="11.2" height="21.1" fill="none" stroke="#868b91" stroke-width="1.4"/>
<circle cx="878.0" cy="431.0" r="3.4" fill="#771f25"/>
<circle cx="938.5" cy="440.0" r="3.4" fill="#771f25"/>
<rect x="718.3" y="437.2" width="81.7" height="20.5" fill="none" stroke="#868b91" stroke-width="1.6"/>
<circle cx="729.0" cy="447.8" r="5.4" fill="#771f25"/>
<rect x="725.8" y="444.6" width="6.4" height="6.4" fill="#84741f"/>
<rect x="727.9" y="446.7" width="2.2" height="2.2" fill="#3a2a22"/>
<circle cx="749.6" cy="447.8" r="5.4" fill="#771f25"/>
<rect x="746.4" y="444.6" width="6.4" height="6.4" fill="#84741f"/>
<rect x="748.5" y="446.7" width="2.2" height="2.2" fill="#3a2a22"/>
<circle cx="770.0" cy="447.8" r="5.4" fill="#771f25"/>
<rect x="766.8" y="444.6" width="6.4" height="6.4" fill="#84741f"/>
<rect x="768.9" y="446.7" width="2.2" height="2.2" fill="#3a2a22"/>
<circle cx="790.5" cy="447.8" r="5.4" fill="#771f25"/>
<rect x="787.3" y="444.6" width="6.4" height="6.4" fill="#84741f"/>
<rect x="789.4" y="446.7" width="2.2" height="2.2" fill="#3a2a22"/>
<rect x="801.0" y="437.5" width="19.0" height="19.7" fill="none" stroke="#868b91" stroke-width="3" rx="2"/>
<rect x="805.0" y="441.5" width="11.0" height="11.5" fill="#771f25"/>
<rect x="807.4" y="444.2" width="6.2" height="6.4" fill="#84741f"/>
<rect x="809.4" y="446.3" width="2.2" height="2.2" fill="#3a2a22"/>
<rect x="892.0" y="448.0" width="150.0" height="87.4" fill="none" stroke="#868b91" stroke-width="1.8"/>
<rect x="1016.0" y="443.0" width="9.7" height="5.0" fill="none" stroke="#868b91" stroke-width="1.4"/>
<rect x="906.2" y="452.5" width="4.6" height="7.0" fill="#771f25"/>
<rect x="906.2" y="524.5" width="4.6" height="8.0" fill="#771f25"/>
<rect x="914.2" y="452.5" width="4.6" height="7.0" fill="#771f25"/>
<rect x="914.2" y="524.5" width="4.6" height="8.0" fill="#771f25"/>
<rect x="922.2" y="452.5" width="4.6" height="7.0" fill="#771f25"/>
<rect x="922.2" y="524.5" width="4.6" height="8.0" fill="#771f25"/>
<rect x="930.3" y="452.5" width="4.6" height="7.0" fill="#771f25"/>
<rect x="930.3" y="524.5" width="4.6" height="8.0" fill="#771f25"/>
<rect x="938.3" y="452.5" width="4.6" height="7.0" fill="#771f25"/>
<rect x="938.3" y="524.5" width="4.6" height="8.0" fill="#771f25"/>
<rect x="946.3" y="452.5" width="4.6" height="7.0" fill="#771f25"/>
<rect x="946.3" y="524.5" width="4.6" height="8.0" fill="#771f25"/>
<rect x="954.3" y="452.5" width="4.6" height="7.0" fill="#771f25"/>
<rect x="954.3" y="524.5" width="4.6" height="8.0" fill="#771f25"/>
<rect x="962.3" y="452.5" width="4.6" height="7.0" fill="#771f25"/>
<rect x="962.3" y="524.5" width="4.6" height="8.0" fill="#771f25"/>
<rect x="970.4" y="452.5" width="4.6" height="7.0" fill="#771f25"/>
<rect x="970.4" y="524.5" width="4.6" height="8.0" fill="#771f25"/>
<rect x="978.4" y="452.5" width="4.6" height="7.0" fill="#771f25"/>
<rect x="978.4" y="524.5" width="4.6" height="8.0" fill="#771f25"/>
<rect x="986.4" y="452.5" width="4.6" height="7.0" fill="#771f25"/>
<rect x="986.4" y="524.5" width="4.6" height="8.0" fill="#771f25"/>
<rect x="994.4" y="452.5" width="4.6" height="7.0" fill="#771f25"/>
<rect x="994.4" y="524.5" width="4.6" height="8.0" fill="#771f25"/>
<rect x="898.0" y="460.9" width="7.5" height="4.6" fill="#771f25"/>
<rect x="992.3" y="460.9" width="7.2" height="4.6" fill="#771f25"/>
<rect x="898.0" y="469.0" width="7.5" height="4.6" fill="#771f25"/>
<rect x="992.3" y="469.0" width="7.2" height="4.6" fill="#771f25"/>
<rect x="898.0" y="477.1" width="7.5" height="4.6" fill="#771f25"/>
<rect x="992.3" y="477.1" width="7.2" height="4.6" fill="#771f25"/>
<rect x="898.0" y="485.2" width="7.5" height="4.6" fill="#771f25"/>
<rect x="992.3" y="485.2" width="7.2" height="4.6" fill="#771f25"/>
<rect x="898.0" y="493.3" width="7.5" height="4.6" fill="#771f25"/>
<rect x="992.3" y="493.3" width="7.2" height="4.6" fill="#771f25"/>
<rect x="898.0" y="501.4" width="7.5" height="4.6" fill="#771f25"/>
<rect x="992.3" y="501.4" width="7.2" height="4.6" fill="#771f25"/>
<rect x="898.0" y="509.5" width="7.5" height="4.6" fill="#771f25"/>
<rect x="992.3" y="509.5" width="7.2" height="4.6" fill="#771f25"/>
<rect x="898.0" y="517.6" width="7.5" height="4.6" fill="#771f25"/>
<rect x="992.3" y="517.6" width="7.2" height="4.6" fill="#771f25"/>
<polyline points="932.6,531.0 932.6,537.0" fill="none" stroke="#771f25" stroke-width="2.5" stroke-linejoin="round" stroke-linecap="round"/>
<polyline points="940.6,531.0 940.6,537.0" fill="none" stroke="#771f25" stroke-width="2.5" stroke-linejoin="round" stroke-linecap="round"/>
<polyline points="948.6,531.0 948.6,537.0" fill="none" stroke="#771f25" stroke-width="2.5" stroke-linejoin="round" stroke-linecap="round"/>
<polyline points="956.7,531.0 956.7,537.0" fill="none" stroke="#771f25" stroke-width="2.5" stroke-linejoin="round" stroke-linecap="round"/>
<polyline points="972.7,531.0 972.7,537.0" fill="none" stroke="#771f25" stroke-width="2.5" stroke-linejoin="round" stroke-linecap="round"/>
<polyline points="980.7,531.0 980.7,537.0" fill="none" stroke="#771f25" stroke-width="2.5" stroke-linejoin="round" stroke-linecap="round"/>
<polyline points="988.7,531.0 988.7,537.0" fill="none" stroke="#771f25" stroke-width="2.5" stroke-linejoin="round" stroke-linecap="round"/>
<polyline points="996.7,531.0 996.7,537.0" fill="none" stroke="#771f25" stroke-width="2.5" stroke-linejoin="round" stroke-linecap="round"/>
<circle cx="932.6" cy="539.3" r="3.3" fill="#771f25"/>
<circle cx="956.7" cy="539.3" r="3.3" fill="#771f25"/>
<rect x="934.5" y="546.6" width="4.2" height="18.8" fill="#3a3f46"/>
<rect x="934.0" y="546.1" width="5.2" height="6.7" fill="#771f25"/>
<rect x="934.0" y="559.2" width="5.2" height="6.7" fill="#771f25"/>
<rect x="934.5" y="548.1" width="4.2" height="15.8" fill="none" stroke="#787021" stroke-width="1"/>
<rect x="931.5" y="543.6" width="10.2" height="24.8" fill="none" stroke="#868b91" stroke-width="1.4"/>
<rect x="946.2" y="546.6" width="4.5" height="18.8" fill="#3a3f46"/>
<rect x="945.7" y="546.1" width="5.5" height="6.7" fill="#771f25"/>
<rect x="945.7" y="559.2" width="5.5" height="6.7" fill="#771f25"/>
<rect x="946.2" y="548.1" width="4.5" height="15.8" fill="none" stroke="#787021" stroke-width="1"/>
<rect x="943.2" y="543.6" width="10.5" height="24.8" fill="none" stroke="#868b91" stroke-width="1.4"/>
<rect x="608.6" y="496.0" width="16.2" height="5.6" fill="#3a3f46"/>
<rect x="608.1" y="495.5" width="6.0" height="6.6" fill="#771f25"/>
<rect x="619.3" y="495.5" width="6.0" height="6.6" fill="#771f25"/>
<rect x="610.1" y="496.0" width="13.2" height="5.6" fill="none" stroke="#787021" stroke-width="1"/>
<rect x="605.6" y="493.0" width="22.2" height="11.6" fill="none" stroke="#868b91" stroke-width="1.4"/>
<rect x="660.5" y="496.0" width="16.5" height="5.6" fill="#3a3f46"/>
<rect x="660.0" y="495.5" width="6.1" height="6.6" fill="#771f25"/>
<rect x="671.4" y="495.5" width="6.1" height="6.6" fill="#771f25"/>
<rect x="662.0" y="496.0" width="13.5" height="5.6" fill="none" stroke="#787021" stroke-width="1"/>
<rect x="657.5" y="493.0" width="22.5" height="11.6" fill="none" stroke="#868b91" stroke-width="1.4"/>
<rect x="620.4" y="509.3" width="18.0" height="4.2" fill="#3a3f46"/>
<rect x="619.9" y="508.8" width="6.5" height="5.2" fill="#771f25"/>
<rect x="632.4" y="508.8" width="6.5" height="5.2" fill="#771f25"/>
<rect x="621.9" y="509.3" width="15.0" height="4.2" fill="none" stroke="#787021" stroke-width="1"/>
<rect x="617.4" y="506.3" width="24.0" height="10.2" fill="none" stroke="#868b91" stroke-width="1.4"/>
<rect x="647.0" y="509.3" width="18.3" height="4.2" fill="#3a3f46"/>
<rect x="646.5" y="508.8" width="6.6" height="5.2" fill="#771f25"/>
<rect x="659.2" y="508.8" width="6.6" height="5.2" fill="#771f25"/>
<rect x="648.5" y="509.3" width="15.3" height="4.2" fill="none" stroke="#787021" stroke-width="1"/>
<rect x="644.0" y="506.3" width="24.3" height="10.2" fill="none" stroke="#868b91" stroke-width="1.4"/>
<rect x="690.0" y="491.7" width="16.3" height="5.6" fill="#3a3f46"/>
<rect x="689.5" y="491.2" width="6.0" height="6.6" fill="#771f25"/>
<rect x="700.8" y="491.2" width="6.0" height="6.6" fill="#771f25"/>
<rect x="691.5" y="491.7" width="13.3" height="5.6" fill="none" stroke="#787021" stroke-width="1"/>
<rect x="687.0" y="488.7" width="22.3" height="11.6" fill="none" stroke="#868b91" stroke-width="1.4"/>
<rect x="712.7" y="466.7" width="18.1" height="3.3" fill="#3a3f46"/>
<rect x="712.2" y="466.2" width="6.5" height="4.3" fill="#771f25"/>
<rect x="724.8" y="466.2" width="6.5" height="4.3" fill="#771f25"/>
<rect x="714.2" y="466.7" width="15.1" height="3.3" fill="none" stroke="#787021" stroke-width="1"/>
<rect x="709.7" y="463.7" width="24.1" height="9.3" fill="none" stroke="#868b91" stroke-width="1.4"/>
<rect x="712.7" y="477.7" width="18.1" height="3.0" fill="#3a3f46"/>
<rect x="712.2" y="477.2" width="6.5" height="4.0" fill="#771f25"/>
<rect x="724.8" y="477.2" width="6.5" height="4.0" fill="#771f25"/>
<rect x="714.2" y="477.7" width="15.1" height="3.0" fill="none" stroke="#787021" stroke-width="1"/>
<rect x="709.7" y="474.7" width="24.1" height="9.0" fill="none" stroke="#868b91" stroke-width="1.4"/>
<rect x="714.9" y="488.9" width="15.5" height="4.7" fill="#3a3f46"/>
<rect x="714.4" y="488.4" width="5.8" height="5.7" fill="#771f25"/>
<rect x="725.1" y="488.4" width="5.8" height="5.7" fill="#771f25"/>
<rect x="716.4" y="488.9" width="12.5" height="4.7" fill="none" stroke="#787021" stroke-width="1"/>
<rect x="711.9" y="485.9" width="21.5" height="10.7" fill="none" stroke="#868b91" stroke-width="1.4"/>
<rect x="748.3" y="465.0" width="15.5" height="5.4" fill="#3a3f46"/>
<rect x="747.8" y="464.5" width="5.8" height="6.4" fill="#771f25"/>
<rect x="758.5" y="464.5" width="5.8" height="6.4" fill="#771f25"/>
<rect x="749.8" y="465.0" width="12.5" height="5.4" fill="none" stroke="#787021" stroke-width="1"/>
<rect x="745.3" y="462.0" width="21.5" height="11.4" fill="none" stroke="#868b91" stroke-width="1.4"/>
<rect x="772.0" y="465.0" width="18.8" height="3.9" fill="#3a3f46"/>
<rect x="771.5" y="464.5" width="6.7" height="4.9" fill="#771f25"/>
<rect x="784.6" y="464.5" width="6.7" height="4.9" fill="#771f25"/>
<rect x="773.5" y="465.0" width="15.8" height="3.9" fill="none" stroke="#787021" stroke-width="1"/>
<rect x="769.0" y="462.0" width="24.8" height="9.9" fill="none" stroke="#868b91" stroke-width="1.4"/>
<rect x="718.7" y="521.6" width="5.7" height="15.6" fill="#3a3f46"/>
<rect x="718.2" y="521.1" width="6.7" height="5.8" fill="#771f25"/>
<rect x="718.2" y="531.9" width="6.7" height="5.8" fill="#771f25"/>
<rect x="718.7" y="523.1" width="5.7" height="12.6" fill="none" stroke="#787021" stroke-width="1"/>
<rect x="715.7" y="518.6" width="11.7" height="21.6" fill="none" stroke="#868b91" stroke-width="1.4"/>
<rect x="718.7" y="546.0" width="5.7" height="15.5" fill="#3a3f46"/>
<rect x="718.2" y="545.5" width="6.7" height="5.8" fill="#771f25"/>
<rect x="718.2" y="556.2" width="6.7" height="5.8" fill="#771f25"/>
<rect x="718.7" y="547.5" width="5.7" height="12.5" fill="none" stroke="#787021" stroke-width="1"/>
<rect x="715.7" y="543.0" width="11.7" height="21.5" fill="none" stroke="#868b91" stroke-width="1.4"/>
<rect x="730.4" y="532.0" width="5.4" height="15.5" fill="#3a3f46"/>
<rect x="729.9" y="531.5" width="6.4" height="5.8" fill="#771f25"/>
<rect x="729.9" y="542.2" width="6.4" height="5.8" fill="#771f25"/>
<rect x="730.4" y="533.5" width="5.4" height="12.5" fill="none" stroke="#787021" stroke-width="1"/>
<rect x="727.4" y="529.0" width="11.4" height="21.5" fill="none" stroke="#868b91" stroke-width="1.4"/>
<rect x="634.4" y="585.9" width="16.2" height="5.8" fill="#3a3f46"/>
<rect x="633.9" y="585.4" width="6.0" height="6.8" fill="#771f25"/>
<rect x="645.1" y="585.4" width="6.0" height="6.8" fill="#771f25"/>
<rect x="635.9" y="585.9" width="13.2" height="5.8" fill="none" stroke="#787021" stroke-width="1"/>
<rect x="631.4" y="582.9" width="22.2" height="11.8" fill="none" stroke="#868b91" stroke-width="1.4"/>
<rect x="732.0" y="596.2" width="6.0" height="16.4" fill="#3a3f46"/>
<rect x="731.5" y="595.7" width="7.0" height="6.0" fill="#771f25"/>
<rect x="731.5" y="607.1" width="7.0" height="6.0" fill="#771f25"/>
<rect x="732.0" y="597.7" width="6.0" height="13.4" fill="none" stroke="#787021" stroke-width="1"/>
<rect x="729.0" y="593.2" width="12.0" height="22.4" fill="none" stroke="#868b91" stroke-width="1.4"/>
<rect x="782.8" y="562.2" width="16.2" height="3.7" fill="#3a3f46"/>
<rect x="782.3" y="561.7" width="6.0" height="4.7" fill="#771f25"/>
<rect x="793.5" y="561.7" width="6.0" height="4.7" fill="#771f25"/>
<rect x="784.3" y="562.2" width="13.2" height="3.7" fill="none" stroke="#787021" stroke-width="1"/>
<rect x="779.8" y="559.2" width="22.2" height="9.7" fill="none" stroke="#868b91" stroke-width="1.4"/>
<rect x="827.6" y="466.9" width="16.9" height="5.6" fill="#3a3f46"/>
<rect x="827.1" y="466.4" width="6.2" height="6.6" fill="#771f25"/>
<rect x="838.8" y="466.4" width="6.2" height="6.6" fill="#771f25"/>
<rect x="829.1" y="466.9" width="13.9" height="5.6" fill="none" stroke="#787021" stroke-width="1"/>
<rect x="824.6" y="463.9" width="22.9" height="11.6" fill="none" stroke="#868b91" stroke-width="1.4"/>
<rect x="878.5" y="486.7" width="4.1" height="18.8" fill="#3a3f46"/>
<rect x="878.0" y="486.2" width="5.1" height="6.7" fill="#771f25"/>
<rect x="878.0" y="499.3" width="5.1" height="6.7" fill="#771f25"/>
<rect x="878.5" y="488.2" width="4.1" height="15.8" fill="none" stroke="#787021" stroke-width="1"/>
<rect x="875.5" y="483.7" width="10.1" height="24.8" fill="none" stroke="#868b91" stroke-width="1.4"/>
<rect x="878.5" y="538.4" width="5.5" height="16.0" fill="#3a3f46"/>
<rect x="878.0" y="537.9" width="6.5" height="5.9" fill="#771f25"/>
<rect x="878.0" y="549.0" width="6.5" height="5.9" fill="#771f25"/>
<rect x="878.5" y="539.9" width="5.5" height="13.0" fill="none" stroke="#787021" stroke-width="1"/>
<rect x="875.5" y="535.4" width="11.5" height="22.0" fill="none" stroke="#868b91" stroke-width="1.4"/>
<rect x="826.0" y="482.4" width="6.0" height="16.2" fill="#3a3f46"/>
<rect x="825.5" y="481.9" width="7.0" height="6.0" fill="#771f25"/>
<rect x="825.5" y="493.1" width="7.0" height="6.0" fill="#771f25"/>
<rect x="826.0" y="483.9" width="6.0" height="13.2" fill="none" stroke="#787021" stroke-width="1"/>
<rect x="823.0" y="479.4" width="12.0" height="22.2" fill="none" stroke="#868b91" stroke-width="1.4"/>
<rect x="834.3" y="566.9" width="4.4" height="18.8" fill="#3a3f46"/>
<rect x="833.8" y="566.4" width="5.4" height="6.7" fill="#771f25"/>
<rect x="833.8" y="579.5" width="5.4" height="6.7" fill="#771f25"/>
<rect x="834.3" y="568.4" width="4.4" height="15.8" fill="none" stroke="#787021" stroke-width="1"/>
<rect x="831.3" y="563.9" width="10.4" height="24.8" fill="none" stroke="#868b91" stroke-width="1.4"/>
<rect x="624.9" y="521.4" width="4.4" height="12.6" fill="#771f25" stroke="#787021" stroke-width="0.8"/>
<rect x="624.9" y="563.0" width="4.4" height="13.4" fill="#771f25" stroke="#787021" stroke-width="0.8"/>
<rect x="635.3" y="521.4" width="4.4" height="12.6" fill="#771f25" stroke="#787021" stroke-width="0.8"/>
<rect x="635.3" y="563.0" width="4.4" height="13.4" fill="#771f25" stroke="#787021" stroke-width="0.8"/>
<rect x="645.4" y="521.4" width="4.4" height="12.6" fill="#771f25" stroke="#787021" stroke-width="0.8"/>
<rect x="645.4" y="563.0" width="4.4" height="13.4" fill="#771f25" stroke="#787021" stroke-width="0.8"/>
<rect x="655.8" y="521.4" width="4.4" height="12.6" fill="#771f25" stroke="#787021" stroke-width="0.8"/>
<rect x="655.8" y="563.0" width="4.4" height="13.4" fill="#771f25" stroke="#787021" stroke-width="0.8"/>
<rect x="622.0" y="533.0" width="41.0" height="32.5" fill="none" stroke="#787021" stroke-width="1.3"/>
<rect x="622.0" y="536.5" width="41.0" height="24.8" fill="none" stroke="#a5a8ac" stroke-width="1.6"/>
<polyline points="622.0,558.0 663.0,558.0" fill="none" stroke="#a5a8ac" stroke-width="1.2" stroke-linejoin="round" stroke-linecap="round"/>
<circle cx="622.0" cy="548.8" r="2.8" fill="#222831" stroke="#a5a8ac" stroke-width="1.4"/>
<circle cx="619.8" cy="567.8" r="3.3" fill="#8e9297"/>
<circle cx="639.6" cy="549.5" r="3.3" fill="#771f25"/>
<circle cx="658.0" cy="551.6" r="3.3" fill="#771f25"/>
<rect x="686.0" y="504.2" width="11.8" height="43.8" fill="#771f25"/>
<rect x="686.0" y="572.0" width="11.8" height="43.6" fill="#771f25"/>
<rect x="675.2" y="513.2" width="33.8" height="93.4" fill="none" stroke="#787021" stroke-width="1.6" rx="16.9"/>
<polyline points="680.6,511.7 671.5,511.7 671.5,608.7 680.6,608.7" fill="none" stroke="#868b91" stroke-width="1.5" stroke-linejoin="round" stroke-linecap="round"/>
<polyline points="703.2,511.7 712.5,511.7 712.5,608.7 703.2,608.7" fill="none" stroke="#868b91" stroke-width="1.5" stroke-linejoin="round" stroke-linecap="round"/>
<circle cx="668.7" cy="529.0" r="3.3" fill="#771f25"/>
<rect x="758.1" y="476.8" width="2.8" height="11.9" fill="#637682"/>
<rect x="758.1" y="543.6" width="2.8" height="11.7" fill="#637682"/>
<rect x="762.4" y="476.8" width="2.8" height="11.9" fill="#637682"/>
<rect x="762.4" y="543.6" width="2.8" height="11.7" fill="#637682"/>
<rect x="766.7" y="476.8" width="2.8" height="11.9" fill="#637682"/>
<rect x="766.7" y="543.6" width="2.8" height="11.7" fill="#637682"/>
<rect x="771.1" y="476.8" width="2.8" height="11.9" fill="#637682"/>
<rect x="771.1" y="543.6" width="2.8" height="11.7" fill="#637682"/>
<rect x="775.4" y="476.8" width="2.8" height="11.9" fill="#637682"/>
<rect x="775.4" y="543.6" width="2.8" height="11.7" fill="#637682"/>
<rect x="779.7" y="476.8" width="2.8" height="11.9" fill="#637682"/>
<rect x="779.7" y="543.6" width="2.8" height="11.7" fill="#637682"/>
<rect x="784.0" y="476.8" width="2.8" height="11.9" fill="#637682"/>
<rect x="784.0" y="543.6" width="2.8" height="11.7" fill="#637682"/>
<rect x="788.3" y="476.8" width="2.8" height="11.9" fill="#637682"/>
<rect x="788.3" y="543.6" width="2.8" height="11.7" fill="#637682"/>
<rect x="792.7" y="476.8" width="2.8" height="11.9" fill="#637682"/>
<rect x="792.7" y="543.6" width="2.8" height="11.7" fill="#637682"/>
<rect x="797.0" y="476.8" width="2.8" height="11.9" fill="#637682"/>
<rect x="797.0" y="543.6" width="2.8" height="11.7" fill="#637682"/>
<rect x="801.3" y="476.8" width="2.8" height="11.9" fill="#637682"/>
<rect x="801.3" y="543.6" width="2.8" height="11.7" fill="#637682"/>
<rect x="740.3" y="493.1" width="12.5" height="2.8" fill="#637682"/>
<rect x="807.6" y="493.1" width="12.3" height="2.8" fill="#637682"/>
<rect x="740.3" y="497.4" width="12.5" height="2.8" fill="#637682"/>
<rect x="807.6" y="497.4" width="12.3" height="2.8" fill="#637682"/>
<rect x="740.3" y="501.7" width="12.5" height="2.8" fill="#637682"/>
<rect x="807.6" y="501.7" width="12.3" height="2.8" fill="#637682"/>
<rect x="740.3" y="506.1" width="12.5" height="2.8" fill="#637682"/>
<rect x="807.6" y="506.1" width="12.3" height="2.8" fill="#637682"/>
<rect x="740.3" y="510.4" width="12.5" height="2.8" fill="#637682"/>
<rect x="807.6" y="510.4" width="12.3" height="2.8" fill="#637682"/>
<rect x="740.3" y="514.7" width="12.5" height="2.8" fill="#637682"/>
<rect x="807.6" y="514.7" width="12.3" height="2.8" fill="#637682"/>
<rect x="740.3" y="519.0" width="12.5" height="2.8" fill="#637682"/>
<rect x="807.6" y="519.0" width="12.3" height="2.8" fill="#637682"/>
<rect x="740.3" y="523.3" width="12.5" height="2.8" fill="#637682"/>
<rect x="807.6" y="523.3" width="12.3" height="2.8" fill="#637682"/>
<rect x="740.3" y="527.7" width="12.5" height="2.8" fill="#637682"/>
<rect x="807.6" y="527.7" width="12.3" height="2.8" fill="#637682"/>
<rect x="740.3" y="532.0" width="12.5" height="2.8" fill="#637682"/>
<rect x="807.6" y="532.0" width="12.3" height="2.8" fill="#637682"/>
<rect x="740.3" y="536.3" width="12.5" height="2.8" fill="#637682"/>
<rect x="807.6" y="536.3" width="12.3" height="2.8" fill="#637682"/>
<rect x="758.2" y="493.4" width="44.4" height="44.2" fill="none" stroke="#868b91" stroke-width="1.6"/>
<rect x="744.2" y="577.3" width="16.2" height="5.4" fill="#637682"/>
<rect x="802.2" y="577.3" width="16.2" height="5.4" fill="#637682"/>
<rect x="744.2" y="587.7" width="16.2" height="5.4" fill="#637682"/>
<rect x="802.2" y="587.7" width="16.2" height="5.4" fill="#637682"/>
<rect x="744.2" y="597.8" width="16.2" height="5.4" fill="#637682"/>
<rect x="802.2" y="597.8" width="16.2" height="5.4" fill="#637682"/>
<rect x="744.2" y="607.8" width="16.2" height="5.4" fill="#637682"/>
<rect x="802.2" y="607.8" width="16.2" height="5.4" fill="#637682"/>
<rect x="821.0" y="609.0" width="3.0" height="3.0" fill="#b0b4b8"/>
<rect x="766.2" y="571.7" width="30.6" height="47.3" fill="none" stroke="#7d7f78" stroke-width="1.6"/>
<rect x="847.2" y="526.0" width="2.7" height="4.0" fill="#637682"/>
<rect x="847.2" y="545.8" width="2.7" height="4.2" fill="#637682"/>
<rect x="851.1" y="526.0" width="2.7" height="4.0" fill="#637682"/>
<rect x="851.1" y="545.8" width="2.7" height="4.2" fill="#637682"/>
<rect x="855.0" y="526.0" width="2.7" height="4.0" fill="#637682"/>
<rect x="855.0" y="545.8" width="2.7" height="4.2" fill="#637682"/>
<rect x="858.9" y="526.0" width="2.7" height="4.0" fill="#637682"/>
<rect x="858.9" y="545.8" width="2.7" height="4.2" fill="#637682"/>
<rect x="862.8" y="526.0" width="2.7" height="4.0" fill="#637682"/>
<rect x="862.8" y="545.8" width="2.7" height="4.2" fill="#637682"/>
<rect x="843.6" y="532.6" width="4.4" height="2.7" fill="#637682"/>
<rect x="863.0" y="532.6" width="4.3" height="2.7" fill="#637682"/>
<rect x="843.6" y="536.5" width="4.4" height="2.7" fill="#637682"/>
<rect x="863.0" y="536.5" width="4.3" height="2.7" fill="#637682"/>
<rect x="843.6" y="540.4" width="4.4" height="2.7" fill="#637682"/>
<rect x="863.0" y="540.4" width="4.3" height="2.7" fill="#637682"/>
<rect x="838.6" y="521.0" width="34.1" height="33.8" fill="none" stroke="#868b91" stroke-width="2"/>
<polygon points="868.5,521.0 872.7,521.0 872.7,525.2" fill="#868b91"/>
<rect x="845.7" y="578.6" width="9.7" height="10.7" fill="#771f25"/>
<rect x="865.0" y="578.6" width="8.8" height="10.7" fill="#771f25"/>
<circle cx="861.5" cy="584.0" r="15.5" fill="none" stroke="#868b91" stroke-width="1.8"/>
<circle cx="861.5" cy="584.0" r="11.4" fill="none" stroke="#787021" stroke-width="1.5"/>
<circle cx="750.6" cy="481.6" r="3.4" fill="#771f25"/>
<circle cx="730.2" cy="502.5" r="3.4" fill="#771f25"/>
<circle cx="718.3" cy="515.6" r="3.4" fill="#771f25"/>
<circle cx="731.3" cy="525.7" r="3.4" fill="#771f25"/>
<circle cx="744.2" cy="544.7" r="3.4" fill="#771f25"/>
<circle cx="733.0" cy="572.0" r="3.4" fill="#771f25"/>
<circle cx="724.8" cy="610.2" r="3.4" fill="#771f25"/>
<circle cx="767.9" cy="499.4" r="3.4" fill="#771f25"/>
<circle cx="780.8" cy="499.4" r="3.4" fill="#771f25"/>
<circle cx="794.8" cy="496.6" r="3.4" fill="#771f25"/>
<circle cx="774.4" cy="506.3" r="3.4" fill="#771f25"/>
<circle cx="776.5" cy="528.3" r="3.4" fill="#771f25"/>
<circle cx="780.8" cy="535.9" r="3.4" fill="#771f25"/>
<circle cx="789.5" cy="535.9" r="3.4" fill="#771f25"/>
<circle cx="763.6" cy="565.0" r="3.4" fill="#771f25"/>
<circle cx="780.8" cy="574.2" r="3.4" fill="#771f25"/>
<circle cx="769.0" cy="590.4" r="3.4" fill="#771f25"/>
<circle cx="763.6" cy="581.4" r="3.4" fill="#771f25"/>
<circle cx="866.2" cy="474.7" r="3.4" fill="#771f25"/>
<circle cx="877.0" cy="470.3" r="3.4" fill="#771f25"/>
<circle cx="885.6" cy="465.4" r="3.4" fill="#771f25"/>
<circle cx="857.6" cy="487.6" r="3.4" fill="#771f25"/>
<circle cx="867.3" cy="487.6" r="3.4" fill="#771f25"/>
<circle cx="867.3" cy="496.2" r="3.4" fill="#771f25"/>
<circle cx="813.4" cy="487.6" r="3.4" fill="#771f25"/>
<circle cx="844.7" cy="518.2" r="3.4" fill="#771f25"/>
<circle cx="854.4" cy="518.2" r="3.4" fill="#771f25"/>
<circle cx="829.0" cy="535.9" r="3.4" fill="#771f25"/>
<circle cx="816.2" cy="554.8" r="3.4" fill="#771f25"/>
<circle cx="826.3" cy="568.9" r="3.4" fill="#771f25"/>
<circle cx="823.0" cy="590.4" r="3.4" fill="#771f25"/>
<circle cx="848.0" cy="557.0" r="3.4" fill="#771f25"/>
<circle cx="890.0" cy="539.8" r="3.4" fill="#771f25"/>
<circle cx="890.0" cy="552.7" r="3.4" fill="#771f25"/>
<circle cx="880.2" cy="512.8" r="3.4" fill="#771f25"/>
<circle cx="908.0" cy="452.0" r="3.4" fill="#771f25"/>
<path d="M788.5 424V504M748 464.5H830" stroke="#cf3538" stroke-width="1" shape-rendering="crispEdges"/>
<rect x="531.5" y="303.5" width="513.5" height="321.0" fill="none" stroke="#f2f2f2" stroke-width="2"/></svg>
<svg class="b" style="left:317px;top:161px;" width="932" height="582" viewBox="317 161 932 582" fill="none"><path d="M347.5 179V182M357.5 179V182M367.5 175V182M377.5 179V182M387.5 179V182M397.5 179V182M407.5 179V182M417.5 179V182M427.5 175V182M437.5 179V182M447.5 179V182M457.5 179V182M467.5 179V182M477.5 179V182M487.5 175V182M497.5 179V182M507.5 179V182M517.5 179V182M527.5 179V182M537.5 179V182M547.5 175V182M557.5 179V182M567.5 179V182M577.5 179V182M587.5 179V182M597.5 179V182M607.5 175V182M617.5 179V182M627.5 179V182M638.5 179V182M648.5 179V182M658.5 179V182M668.5 175V182M678.5 179V182M688.5 179V182M698.5 179V182M708.5 179V182M718.5 179V182M728.5 175V182M738.5 179V182M748.5 179V182M758.5 179V182M768.5 179V182M778.5 179V182M788.5 175V182M798.5 179V182M808.5 179V182M818.5 179V182M828.5 179V182M838.5 179V182M848.5 175V182M858.5 179V182M868.5 179V182M878.5 179V182M888.5 179V182M898.5 179V182M908.5 175V182M918.5 179V182M928.5 179V182M938.5 179V182M948.5 179V182M958.5 179V182M968.5 175V182M978.5 179V182M988.5 179V182M998.5 179V182M1008.5 179V182M1018.5 179V182M1028.5 175V182M1038.5 179V182M1048.5 179V182M1058.5 179V182M1068.5 179V182M1078.5 179V182M1088.5 175V182M1098.5 179V182M1108.5 179V182M1118.5 179V182M1128.5 179V182M1138.5 179V182M1149.5 175V182M1159.5 179V182M1169.5 179V182M1179.5 179V182M1189.5 179V182M1199.5 179V182M1209.5 175V182M1219.5 179V182M1229.5 179V182M336 183.5H340M336 193.5H340M336 203.5H340M336 213.5H340M332 223.5H340M336 233.5H340M336 243.5H340M336 253.5H340M336 263.5H340M336 273.5H340M332 283.5H340M336 293.5H340M336 303.5H340M336 313.5H340M336 323.5H340M336 333.5H340M332 343.5H340M336 353.5H340M336 363.5H340M336 373.5H340M336 383.5H340M336 393.5H340M332 403.5H340M336 414.5H340M336 424.5H340M336 434.5H340M336 444.5H340M336 454.5H340M332 464.5H340M336 474.5H340M336 484.5H340M336 494.5H340M336 504.5H340M336 514.5H340M332 524.5H340M336 534.5H340M336 544.5H340M336 554.5H340M336 564.5H340M336 574.5H340M332 584.5H340M336 594.5H340M336 604.5H340M336 614.5H340M336 624.5H340M336 634.5H340M332 644.5H340M336 654.5H340M336 664.5H340M336 674.5H340M336 684.5H340M336 694.5H340M332 704.5H340M336 714.5H340M336 724.5H340M336 734.5H340" stroke="#c3cfcf" stroke-width="1" shape-rendering="crispEdges"/></svg>
<span class="t" style="left:337.0px;top:158px;width:60px;text-align:center;font-size:12px;color:#5d6a6f">-52,5</span>
<span class="t" style="left:397.1px;top:158px;width:60px;text-align:center;font-size:12px;color:#5d6a6f">-45</span>
<span class="t" style="left:457.2px;top:158px;width:60px;text-align:center;font-size:12px;color:#5d6a6f">-37,5</span>
<span class="t" style="left:517.3px;top:158px;width:60px;text-align:center;font-size:12px;color:#5d6a6f">-30</span>
<span class="t" style="left:577.4px;top:158px;width:60px;text-align:center;font-size:12px;color:#5d6a6f">-22,5</span>
<span class="t" style="left:637.6px;top:158px;width:60px;text-align:center;font-size:12px;color:#5d6a6f">-15</span>
<span class="t" style="left:697.7px;top:158px;width:60px;text-align:center;font-size:12px;color:#5d6a6f">-7,5</span>
<span class="t" style="left:757.8px;top:158px;width:60px;text-align:center;font-size:12px;color:#5d6a6f">0</span>
<span class="t" style="left:817.9px;top:158px;width:60px;text-align:center;font-size:12px;color:#5d6a6f">7,5</span>
<span class="t" style="left:878.0px;top:158px;width:60px;text-align:center;font-size:12px;color:#5d6a6f">15</span>
<span class="t" style="left:938.2px;top:158px;width:60px;text-align:center;font-size:12px;color:#5d6a6f">22,5</span>
<span class="t" style="left:998.3px;top:158px;width:60px;text-align:center;font-size:12px;color:#5d6a6f">30</span>
<span class="t" style="left:1058.4px;top:158px;width:60px;text-align:center;font-size:12px;color:#5d6a6f">37,5</span>
<span class="t" style="left:1118.5px;top:158px;width:60px;text-align:center;font-size:12px;color:#5d6a6f">45</span>
<span class="t" style="left:1178.6px;top:158px;width:60px;text-align:center;font-size:12px;color:#5d6a6f">52,5</span>
<span class="t" style="left:296px;top:213.1px;width:60px;text-align:center;font-size:12px;color:#5d6a6f;transform:rotate(-90deg)">30</span>
<span class="t" style="left:296px;top:273.2px;width:60px;text-align:center;font-size:12px;color:#5d6a6f;transform:rotate(-90deg)">22,5</span>
<span class="t" style="left:296px;top:333.4px;width:60px;text-align:center;font-size:12px;color:#5d6a6f;transform:rotate(-90deg)">15</span>
<span class="t" style="left:296px;top:393.5px;width:60px;text-align:center;font-size:12px;color:#5d6a6f;transform:rotate(-90deg)">7,5</span>
<span class="t" style="left:296px;top:453.6px;width:60px;text-align:center;font-size:12px;color:#5d6a6f;transform:rotate(-90deg)">0</span>
<span class="t" style="left:296px;top:513.7px;width:60px;text-align:center;font-size:12px;color:#5d6a6f;transform:rotate(-90deg)">-7,5</span>
<span class="t" style="left:296px;top:573.8px;width:60px;text-align:center;font-size:12px;color:#5d6a6f;transform:rotate(-90deg)">-15</span>
<span class="t" style="left:296px;top:634.0px;width:60px;text-align:center;font-size:12px;color:#5d6a6f;transform:rotate(-90deg)">-22,5</span>
<span class="t" style="left:296px;top:694.1px;width:60px;text-align:center;font-size:12px;color:#5d6a6f;transform:rotate(-90deg)">-30</span>
<div class="b" style="left:624px;top:202px;width:328px;height:33px;background:#fff;border-radius:7px;"></div>
<div class="b" style="left:629.5px;top:204.8px;width:27px;height:27px;background:#b9dedb;border-radius:6.5px;"></div>
<div class="b" style="left:685.8px;top:204.8px;width:27px;height:27px;background:#b9dedb;border-radius:6.5px;"></div>
<div class="b" style="left:713.9px;top:204.8px;width:27px;height:27px;background:#b9dedb;border-radius:6.5px;"></div>
<div class="b" style="left:742px;top:204.8px;width:27px;height:27px;background:#b9dedb;border-radius:6.5px;"></div>
<div class="b" style="left:770px;top:204.8px;width:27px;height:27px;background:#b9dedb;border-radius:6.5px;"></div>
<div class="b" style="left:798px;top:204.8px;width:27px;height:27px;background:#b9dedb;border-radius:6.5px;"></div>
<div class="b" style="left:858px;top:210px;width:1px;height:17px;background:#9aa8a8;"></div>
<div class="b" style="left:1358px;top:729.5px;width:75px;height:31.5px;background:#fff;border:2.6px solid #e8792a;"></div>
<span class="t" style="left:1391px;top:736.6px;font-size:12.5px;color:#1f2b30;font-weight:bold;letter-spacing:-0.281px;">Слои</span>
<svg class="b" style="left:10px;top:10px" width="16" height="16" viewBox="0 0 16 16" fill="none"><path d="M0 0H7.5A8 8 0 0 1 7.5 16H0Z" fill="#f4792f"/><circle cx="5.6" cy="8" r="3.2" fill="#fde3d2"/><circle cx="5.6" cy="8" r="1.6" fill="#f4792f"/><path d="M0 5.2H3.6M0 8H4.2M0 10.8H3.6" stroke="#fde3d2" stroke-width="1"/><path d="M5.6 3.6V4.8M5.6 11.2V12.4M9.4 8H8.4M8.3 5.3L7.5 6.1M8.3 10.7L7.5 9.9" stroke="#fde3d2" stroke-width="1.4"/></svg>
<svg class="b" style="left:1464.0px;top:8.0px" width="20" height="20" viewBox="-10.0 -10.0 20 20" fill="none" stroke-linecap="round" stroke-linejoin="round"><path d="M-5 0.2H5" stroke="#435157" stroke-width="1.3"/></svg>
<svg class="b" style="left:1492.0px;top:7.7px" width="20" height="20" viewBox="-10.0 -10.0 20 20" fill="none" stroke-linecap="round" stroke-linejoin="round"><path d="M-2.2 -2.8V-3.6A1.6 1.6 0 0 1 -0.6 -5.2H3.6A1.6 1.6 0 0 1 5.2 -3.6V0.8A1.6 1.6 0 0 1 3.6 2.4H2.8" stroke="#435157" stroke-width="1.2"/><rect x="-5" y="-2.6" width="7.6" height="7.6" rx="1.6" stroke="#435157" stroke-width="1.2"/></svg>
<svg class="b" style="left:1520.4px;top:7.7px" width="20" height="20" viewBox="-10.0 -10.0 20 20" fill="none" stroke-linecap="round" stroke-linejoin="round"><path d="M-4.3 -4.3L4.3 4.3M4.3 -4.3L-4.3 4.3" stroke="#435157" stroke-width="1.3"/></svg>
<svg class="b" style="left:1489.2px;top:44.4px" width="12" height="10" viewBox="-6.0 -5.0 12 10" fill="none" stroke-linecap="round" stroke-linejoin="round"><path d="M-4.0 -2.2L0 2.2L4.0 -2.2" stroke="#435157" stroke-width="1.3"/></svg>
<svg class="b" style="left:1515.8px;top:39.0px" width="20" height="20" viewBox="-10.0 -10.0 20 20" fill="none" stroke-linecap="round" stroke-linejoin="round"><path d="M-5.6 -5.4H5.6M-1.8 -5.6Q0 -8.6 1.8 -5.6" stroke="#9eabab" stroke-width="1.1"/><path d="M-4.6 -4.4L-4.2 6A1.6 1.6 0 0 0 -2.6 7.6H2.6A1.6 1.6 0 0 0 4.2 6L4.6 -4.4M-1.6 -2.6V5M1.6 -2.6V5" stroke="#9eabab" stroke-width="1.1"/></svg>
<div class="b" style="left:11.3px;top:70px;width:1.5px;height:18px;background:#b4c2c1"></div><div class="b" style="left:14.7px;top:70px;width:1.5px;height:18px;background:#b4c2c1"></div>
<div class="b" style="left:197.8px;top:70px;width:1.5px;height:18px;background:#b4c2c1"></div><div class="b" style="left:201.2px;top:70px;width:1.5px;height:18px;background:#b4c2c1"></div>
<div class="b" style="left:487.3px;top:70px;width:1.5px;height:18px;background:#b4c2c1"></div><div class="b" style="left:490.7px;top:70px;width:1.5px;height:18px;background:#b4c2c1"></div>
<div class="b" style="left:77.2px;top:70px;width:1.6px;height:18px;background:#b9c6c5"></div>
<div class="b" style="left:133.2px;top:70px;width:1.6px;height:18px;background:#b9c6c5"></div>
<div class="b" style="left:291.2px;top:70px;width:1.6px;height:18px;background:#b9c6c5"></div>
<div class="b" style="left:385.2px;top:70px;width:1.6px;height:18px;background:#b9c6c5"></div>
<div class="b" style="left:450.7px;top:70px;width:1.6px;height:18px;background:#b9c6c5"></div>
<div class="b" style="left:525.2px;top:70px;width:1.6px;height:18px;background:#b9c6c5"></div>
<div class="b" style="left:562.2px;top:70px;width:1.6px;height:18px;background:#b9c6c5"></div>
<div class="b" style="left:600.2px;top:70px;width:1.6px;height:18px;background:#b9c6c5"></div>
<div class="b" style="left:638.2px;top:70px;width:1.6px;height:18px;background:#b9c6c5"></div>
<svg class="b" style="left:21.5px;top:69.2px" width="20" height="20" viewBox="-10.0 -10.0 20 20" fill="none" stroke-linecap="round" stroke-linejoin="round"><path d="M-7.2 -5.6A1.6 1.6 0 0 1 -5.6 -7.2H4.2L7.2 -4.2V5.6A1.6 1.6 0 0 1 5.6 7.2H-5.6A1.6 1.6 0 0 1 -7.2 5.6Z" fill="#ccd3d2"/><rect x="-3.8" y="-6" width="6.6" height="3.6" rx="0.6" fill="#fff"/><rect x="1" y="-6" width="1.6" height="3.6" fill="#ccd3d2"/><rect x="-3.8" y="1.4" width="7.6" height="4.8" rx="0.6" fill="#fff"/></svg>
<svg class="b" style="left:49.5px;top:69.2px" width="20" height="20" viewBox="-10.0 -10.0 20 20" fill="none" stroke-linecap="round" stroke-linejoin="round"><path d="M-4.6 -7.2H5.2L7.2 -5.2V3.8A1.4 1.4 0 0 1 5.8 5.2H5" fill="#b9bfbe" stroke="#858c8b" stroke-width="1.2"/><path d="M-7.2 -3.6A1.6 1.6 0 0 1 -5.6 -5.2H3.6L5.2 -3.6V5.6A1.6 1.6 0 0 1 3.6 7.2H-5.6A1.6 1.6 0 0 1 -7.2 5.6Z" fill="#c3c8c7" stroke="#858c8b" stroke-width="1.2"/><rect x="-3.2" y="-5" width="5" height="3" fill="#fff" stroke="#858c8b" stroke-width="0.9"/><rect x="-3.6" y="0.6" width="6.4" height="4.6" fill="#fff" stroke="#858c8b" stroke-width="0.9"/></svg>
<svg class="b" style="left:87.0px;top:69.2px" width="20" height="20" viewBox="-10.0 -10.0 20 20" fill="none" stroke-linecap="round" stroke-linejoin="round"><rect x="-7.6" y="-7" width="12.6" height="12.6" rx="2" stroke="#5666d6" stroke-width="1.1" fill="#e4e8fb"/><path d="M-3.4 -7V5.6M0.8 -7V5.6M-7.6 -3.8H5M-7.6 -0.7H5M-7.6 2.4H5" stroke="#5666d6" stroke-width="1.1"/><path d="M-0.6 3.6L2.4 6.6L7.6 1.2" stroke="#fff" stroke-width="4.2"/><path d="M-0.6 3.6L2.4 6.6L7.6 1.2" stroke="#1f9a30" stroke-width="2.4"/></svg>
<svg class="b" style="left:112.3px;top:74.1px" width="12" height="10" viewBox="-6.0 -5.0 12 10" fill="none" stroke-linecap="round" stroke-linejoin="round"><path d="M-3.2 -1.7L0 1.7L3.2 -1.7" stroke="#435157" stroke-width="1.3"/></svg>
<svg class="b" style="left:143.5px;top:69.4px" width="20" height="20" viewBox="-10.0 -10.0 20 20" fill="none" stroke-linecap="round" stroke-linejoin="round"><path d="M-3.4 -6L-7.2 -2.4L-3.4 1.2M-7 -2.4H2.4A4.8 4.8 0 0 1 7.2 2.4V5.6" stroke="#a7b2b1" stroke-width="1.3"/></svg>
<svg class="b" style="left:171.5px;top:69.4px" width="20" height="20" viewBox="-10.0 -10.0 20 20" fill="none" stroke-linecap="round" stroke-linejoin="round"><path d="M3.4 -6L7.2 -2.4L3.4 1.2M7 -2.4H-2.4A4.8 4.8 0 0 0 -7.2 2.4V5.6" stroke="#a7b2b1" stroke-width="1.3"/></svg>
<div class="b" style="left:204px;top:65px;width:27px;height:27px;background:#b9dedb;border-radius:7px"></div>
<div class="b" style="left:232px;top:65px;width:27px;height:27px;background:#b9dedb;border-radius:7px"></div>
<div class="b" style="left:494px;top:65px;width:27px;height:27px;background:#b9dedb;border-radius:7px"></div>
<svg class="b" style="left:207.5px;top:68.5px" width="20" height="20" viewBox="-10.0 -10.0 20 20" fill="none" stroke-linecap="round" stroke-linejoin="round"><path d="M-4.4 -6V2" stroke="#435157" stroke-width="1.3" stroke-dasharray="1.4 1.8" stroke-linecap="butt"/><path d="M-7.2 5H-1.6M-4.4 2.6V7.4" stroke="#435157" stroke-width="1.3"/><path d="M0 5H7" stroke="#435157" stroke-width="1.3" stroke-dasharray="1.4 1.6" stroke-linecap="butt"/><g transform="translate(3.4 -2.4) rotate(45) scale(1.0)"><path d="M-3 3.6V0A3 3 0 0 1 0 -3" stroke="#c93030" stroke-width="2.3" stroke-linecap="butt"/><path d="M0 -3A3 3 0 0 1 3 0V3.6" stroke="#3d55d4" stroke-width="2.3" stroke-linecap="butt"/></g></svg>
<svg class="b" style="left:235.5px;top:68.5px" width="20" height="20" viewBox="-10.0 -10.0 20 20" fill="none" stroke-linecap="round" stroke-linejoin="round"><path d="M-7 -5.6H7" stroke="#5d6c70" stroke-width="1" stroke-dasharray="1.3 1.3" stroke-linecap="butt"/><path d="M-7 -3.0999999999999996H7" stroke="#5d6c70" stroke-width="1" stroke-dasharray="1.3 1.3" stroke-linecap="butt"/><path d="M-7 -0.5999999999999996H7" stroke="#5d6c70" stroke-width="1" stroke-dasharray="1.3 1.3" stroke-linecap="butt"/><path d="M-7 1.9000000000000004H7" stroke="#5d6c70" stroke-width="1" stroke-dasharray="1.3 1.3" stroke-linecap="butt"/><path d="M-7 4.4H7" stroke="#5d6c70" stroke-width="1" stroke-dasharray="1.3 1.3" stroke-linecap="butt"/><path d="M-7 6.9H7" stroke="#5d6c70" stroke-width="1" stroke-dasharray="1.3 1.3" stroke-linecap="butt"/><circle cx="3.4" cy="-2.4" r="5.4" fill="#b9dedb"/><g transform="translate(3.4 -2.4) rotate(45) scale(1.0)"><path d="M-3 3.6V0A3 3 0 0 1 0 -3" stroke="#c93030" stroke-width="2.3" stroke-linecap="butt"/><path d="M0 -3A3 3 0 0 1 3 0V3.6" stroke="#3d55d4" stroke-width="2.3" stroke-linecap="butt"/></g></svg>
<svg class="b" style="left:264.0px;top:68.5px" width="20" height="20" viewBox="-10.0 -10.0 20 20" fill="none" stroke-linecap="round" stroke-linejoin="round"><g transform="translate(-3.6 4.6)"><path d="M2.20 0.00L4.00 0.00" stroke="#435157" stroke-width="2.2" stroke-linecap="butt"/><path d="M1.10 1.91L2.00 3.46" stroke="#435157" stroke-width="2.2" stroke-linecap="butt"/><path d="M-1.10 1.91L-2.00 3.46" stroke="#435157" stroke-width="2.2" stroke-linecap="butt"/><path d="M-2.20 0.00L-4.00 0.00" stroke="#435157" stroke-width="2.2" stroke-linecap="butt"/><path d="M-1.10 -1.91L-2.00 -3.46" stroke="#435157" stroke-width="2.2" stroke-linecap="butt"/><path d="M1.10 -1.91L2.00 -3.46" stroke="#435157" stroke-width="2.2" stroke-linecap="butt"/><circle r="2.4" stroke="#435157" stroke-width="1.6" fill="#fff"/></g><g transform="translate(3.4 -3) rotate(45) scale(1.0)"><path d="M-3 3.6V0A3 3 0 0 1 0 -3" stroke="#c93030" stroke-width="2.3" stroke-linecap="butt"/><path d="M0 -3A3 3 0 0 1 3 0V3.6" stroke="#3d55d4" stroke-width="2.3" stroke-linecap="butt"/></g></svg>
<svg class="b" style="left:301.5px;top:69.2px" width="20" height="20" viewBox="-10.0 -10.0 20 20" fill="none" stroke-linecap="round" stroke-linejoin="round"><path d="M-5.4 1.4A4.8 4.8 0 1 1 1.4 -5.4" stroke="#a7b2b1" stroke-width="1.2"/><path d="M3.5 -3H5.6A1.6 1.6 0 0 1 7.2 -1.4V5.2A1.6 1.6 0 0 1 5.6 6.8H-1.3A1.6 1.6 0 0 1 -2.9 5.2V3.5A5.8 5.8 0 0 0 3.5 -3Z" fill="#ccd3d2" stroke="#a7b2b1" stroke-width="1.1"/></svg>
<svg class="b" style="left:329.7px;top:69.2px" width="20" height="20" viewBox="-10.0 -10.0 20 20" fill="none" stroke-linecap="round" stroke-linejoin="round"><path d="M2 -3H5.6A1.6 1.6 0 0 1 7.2 -1.4V5.6A1.6 1.6 0 0 1 5.6 7.2H-1.2A1.6 1.6 0 0 1 -2.8 5.6V3A5 5 0 1 1 2 -3Z" fill="#ccd3d2" stroke="#a7b2b1" stroke-width="1.1"/></svg>
<svg class="b" style="left:357.6px;top:69.2px" width="20" height="20" viewBox="-10.0 -10.0 20 20" fill="none" stroke-linecap="round" stroke-linejoin="round"><circle cx="-2.2" cy="-2.2" r="5" fill="#ccd3d2" stroke="#a7b2b1" stroke-width="1.1"/><rect x="-2.8" y="-3" width="10" height="10.2" rx="1.6" fill="#c3cbca" fill-opacity="0.85" stroke="#a7b2b1" stroke-width="1.1"/></svg>
<svg class="b" style="left:395.0px;top:69.2px" width="20" height="20" viewBox="-10.0 -10.0 20 20" fill="none" stroke-linecap="round" stroke-linejoin="round"><rect x="-6.6" y="-6.6" width="13.2" height="13.2" stroke="#a7b2b1" stroke-width="1.1" stroke-dasharray="1.6 1.6"/><rect x="-1.2" y="-1.4" width="5.6" height="5.6" rx="1" stroke="#a7b2b1" stroke-width="1.1" fill="#fff"/><rect x="-4.4" y="-4.6" width="5.8" height="5.8" rx="1" stroke="#a7b2b1" stroke-width="1.1" fill="#fff"/><circle cx="-6.6" cy="-6.6" r="1.3" fill="#fff" stroke="#a7b2b1" stroke-width="1"/><circle cx="-6.6" cy="6.6" r="1.3" fill="#fff" stroke="#a7b2b1" stroke-width="1"/><circle cx="6.6" cy="-6.6" r="1.3" fill="#fff" stroke="#a7b2b1" stroke-width="1"/><circle cx="6.6" cy="6.6" r="1.3" fill="#fff" stroke="#a7b2b1" stroke-width="1"/></svg>
<svg class="b" style="left:424.0px;top:69.4px" width="20" height="20" viewBox="-10.0 -10.0 20 20" fill="none" stroke-linecap="round" stroke-linejoin="round"><rect x="-7" y="-6.6" width="7" height="7" stroke="#a7b2b1" stroke-width="1.1"/><rect x="-3" y="-2.4" width="7.2" height="7.2" stroke="#a7b2b1" stroke-width="1.1"/><circle cx="-7" cy="-6.6" r="1.4" fill="#fff" stroke="#a7b2b1" stroke-width="1"/><circle cx="0" cy="-6.6" r="1.4" fill="#fff" stroke="#a7b2b1" stroke-width="1"/><circle cx="-7" cy="0.4" r="1.4" fill="#fff" stroke="#a7b2b1" stroke-width="1"/><circle cx="0" cy="0.4" r="1.4" fill="#fff" stroke="#a7b2b1" stroke-width="1"/><circle cx="4.2" cy="-2.4" r="1.4" fill="#fff" stroke="#a7b2b1" stroke-width="1"/><circle cx="-3" cy="4.8" r="1.4" fill="#fff" stroke="#a7b2b1" stroke-width="1"/><circle cx="4.2" cy="4.8" r="1.4" fill="#fff" stroke="#a7b2b1" stroke-width="1"/></svg>
<svg class="b" style="left:461.0px;top:69.2px" width="20" height="20" viewBox="-10.0 -10.0 20 20" fill="none" stroke-linecap="round" stroke-linejoin="round"><rect x="-7" y="-7" width="5.6" height="5.6" rx="1.4" stroke="#a7b2b1" stroke-width="1.1"/><rect x="1.4" y="-7" width="5.6" height="5.6" rx="1.6" stroke="#a7b2b1" stroke-width="1.1" stroke-dasharray="2.2 1.8"/><rect x="-7" y="1.4" width="5.6" height="5.6" rx="1.6" stroke="#a7b2b1" stroke-width="1.1" stroke-dasharray="2.2 1.8"/><rect x="1.4" y="1.4" width="5.6" height="5.6" rx="1.6" stroke="#a7b2b1" stroke-width="1.1" stroke-dasharray="2.2 1.8"/></svg>
<svg class="b" style="left:497.4px;top:69.2px" width="20" height="20" viewBox="-10.0 -10.0 20 20" fill="none" stroke-linecap="round" stroke-linejoin="round"><path d="M-5 -7.3V5.2L-1.9 2.6L0.4 7.4L3 6.2L0.8 1.5L5 1.2Z" fill="#fff" stroke="#435157" stroke-width="1.15"/></svg>
<svg class="b" style="left:535.0px;top:69.4px" width="20" height="20" viewBox="-10.0 -10.0 20 20" fill="none" stroke-linecap="round" stroke-linejoin="round"><rect x="-5" y="-7" width="4.4" height="14.2" rx="1.2" stroke="#9a7420" stroke-width="1.25" fill="#fff"/><rect x="-7.2" y="-4.8" width="14.4" height="4.2" rx="1.2" stroke="#9a7420" stroke-width="1.25" fill="#fff"/><rect x="-4.2" y="-4" width="2.8" height="2.8" fill="#fff"/><path d="M-2.6 1.6H-1.2M-2.6 3.4H-1.2M-2.6 5.2H-1.2M1.6 -2.2V-1.2M3.4 -2.2V-1.2M5.2 -2.2V-1.2" stroke="#9a7420" stroke-width="1"/></svg>
<svg class="b" style="left:573.0px;top:69.2px" width="20" height="20" viewBox="-10.0 -10.0 20 20" fill="none" stroke-linecap="round" stroke-linejoin="round"><path d="M0 -7L2.4 -3.2H-2.4ZM0 7L2.4 3.2H-2.4ZM-7 0L-3.2 2.4V-2.4ZM7 0L3.2 2.4V-2.4Z" fill="#a7b2b1"/><circle r="1.6" fill="#a7b2b1"/><path d="M-7 -6.4H-3.6M3.6 -6.4H7M-7 6.4H-3.6M3.6 6.4H7M-6.4 -4.4H-5.2M5.2 -4.4H6.4M-6.4 4.4H-5.2M5.2 4.4H6.4" stroke="#a7b2b1" stroke-width="0.9" stroke-dasharray="1 0.8" stroke-linecap="butt"/></svg>
<svg class="b" style="left:610.0px;top:69.2px" width="20" height="20" viewBox="-10.0 -10.0 20 20" fill="none" stroke-linecap="round" stroke-linejoin="round"><path d="M-2.2 -6.2H7M-2.2 -0.2H7M0.2 -6.2V4.4M6.6 -6.2V2.6" stroke="#59646c" stroke-width="1" stroke-dasharray="1 1.1" stroke-linecap="butt"/><path d="M-5.8 -4.2V4.6A1.2 1.2 0 0 0 -4.6 5.8H4" stroke="#3f52d0" stroke-width="1.3"/><path d="M-5.8 -7.4L-3.6 -3.6H-8ZM7.6 5.8L3.8 3.6V8Z" fill="#3f52d0"/></svg>
<svg class="b" style="left:648.2px;top:69.0px" width="20" height="20" viewBox="-10.0 -10.0 20 20" fill="none" stroke-linecap="round" stroke-linejoin="round"><rect x="-6.8" y="-6.8" width="13.6" height="13.6" rx="1.6" stroke="#a7b2b1" stroke-width="1.2"/><path d="M-3.4 0H3.4M0 -3.4V3.4" stroke="#a7b2b1" stroke-width="1" stroke-dasharray="1 1" stroke-linecap="butt"/></svg>
<svg class="b" style="left:676.2px;top:69.0px" width="20" height="20" viewBox="-10.0 -10.0 20 20" fill="none" stroke-linecap="round" stroke-linejoin="round"><circle r="6.8" stroke="#a7b2b1" stroke-width="1.2"/><path d="M-3.4 0H3.4M0 -3.4V3.4" stroke="#a7b2b1" stroke-width="1" stroke-dasharray="1 1" stroke-linecap="butt"/><rect x="-7.5" y="-7.5" width="1" height="1" fill="#a7b2b1"/><rect x="6.5" y="-7.5" width="1" height="1" fill="#a7b2b1"/><rect x="-7.5" y="6.5" width="1" height="1" fill="#a7b2b1"/><rect x="6.5" y="6.5" width="1" height="1" fill="#a7b2b1"/></svg>
<svg class="b" style="left:704.2px;top:69.0px" width="20" height="20" viewBox="-10.0 -10.0 20 20" fill="none" stroke-linecap="round" stroke-linejoin="round"><rect x="-7" y="-7" width="14" height="14" stroke="#a7b2b1" stroke-width="1" stroke-dasharray="1 1" stroke-linecap="butt"/><ellipse rx="6.8" ry="4.8" stroke="#a7b2b1" stroke-width="1.2"/><path d="M-3.4 0H3.4M0 -3.4V3.4" stroke="#a7b2b1" stroke-width="1" stroke-dasharray="1 1" stroke-linecap="butt"/></svg>
<svg class="b" style="left:732.2px;top:69.0px" width="20" height="20" viewBox="-10.0 -10.0 20 20" fill="none" stroke-linecap="round" stroke-linejoin="round"><path d="M0 -6.8L6.8 -1.6L4 6H-4L-6.8 -1.6Z" stroke="#a7b2b1" stroke-width="1.2"/><path d="M-3.4 0H3.4M0 -3.4V3.4" stroke="#a7b2b1" stroke-width="1" stroke-dasharray="1 1" stroke-linecap="butt"/><path d="M-7 -7H-4.4M4.4 -7H7M-7 5V7M7 5V7M-7 -7V-5M7 -7V-5" stroke="#a7b2b1" stroke-width="1" stroke-dasharray="1 1" stroke-linecap="butt"/></svg>
<svg class="b" style="left:760.4px;top:69.0px" width="20" height="20" viewBox="-10.0 -10.0 20 20" fill="none" stroke-linecap="round" stroke-linejoin="round"><rect x="-7" y="-7" width="14" height="14" stroke="#a7b2b1" stroke-width="1" stroke-dasharray="1 1" stroke-linecap="butt"/><path d="M0 -4V-2M0 2V4M-4 0H-2M2 0H4" stroke="#a7b2b1" stroke-width="1" stroke-dasharray="1 1" stroke-linecap="butt"/><path d="M-7 7L7 -7" stroke="#a7b2b1" stroke-width="1.3"/></svg>
<svg class="b" style="left:788.5px;top:69.2px" width="20" height="20" viewBox="-10.0 -10.0 20 20" fill="none" stroke-linecap="round" stroke-linejoin="round"><path d="M-6.6 2.4L-3.4 -6.4L-0.2 2.4M-5.4 -0.6H-1.4" stroke="#a7b2b1" stroke-width="1.2"/><path d="M2 -2.4H5A1.2 1.2 0 0 1 6.2 -1.2V5.6A1.2 1.2 0 0 1 5 6.8H-1.6A1.2 1.2 0 0 1 -2.8 5.6V4" stroke="#a7b2b1" stroke-width="1.2"/></svg>
<svg class="b" style="left:816.6px;top:69.2px" width="20" height="20" viewBox="-10.0 -10.0 20 20" fill="none" stroke-linecap="round" stroke-linejoin="round"><path d="M-7 -7V7H7M0.6 -7H7" stroke="#a7b2b1" stroke-width="1" stroke-dasharray="1 1" stroke-linecap="butt"/><path d="M-7 -7H0L7 0V7" stroke="#a7b2b1" stroke-width="1.2"/><path d="M-4 0H4M0 -4V4" stroke="#a7b2b1" stroke-width="1" stroke-dasharray="1 1" stroke-linecap="butt"/></svg>
<svg class="b" style="left:843.6px;top:69.2px" width="20" height="20" viewBox="-10.0 -10.0 20 20" fill="none" stroke-linecap="round" stroke-linejoin="round"><rect x="-6.4" y="-6.4" width="12.8" height="12.8" rx="2.4" stroke="#a7b2b1" stroke-width="1.2"/><path d="M-2.2 -6.4V6.4M2.2 -6.4V6.4M-6.4 -3.2H6.4M-6.4 0H6.4M-6.4 3.2H6.4" stroke="#a7b2b1" stroke-width="1.1"/></svg>
<svg class="b" style="left:872.6px;top:69.2px" width="20" height="20" viewBox="-10.0 -10.0 20 20" fill="none" stroke-linecap="round" stroke-linejoin="round"><path d="M-7.4 -7H7.4M-7.4 7H7.4" stroke="#a7b2b1" stroke-width="1" stroke-dasharray="1 1" stroke-linecap="butt"/><path d="M-7 -5V5M7 -5V5" stroke="#a7b2b1" stroke-width="1.6" stroke-dasharray="1 1" stroke-linecap="butt"/><path d="M-3.4 4L0 -4.4L3.4 4M-2.2 1.4H2.2" stroke="#a7b2b1" stroke-width="1.2"/></svg>
<svg class="b" style="left:901.0px;top:69.6px" width="20" height="20" viewBox="-10.0 -10.0 20 20" fill="none" stroke-linecap="round" stroke-linejoin="round"><path d="M-6.2 7V-5.4A1.4 1.4 0 0 1 -4.8 -6.8H5A1.4 1.4 0 0 1 6.4 -5.4V2.8A1.4 1.4 0 0 1 5 4.2H-3.4Z" stroke="#a7b2b1" stroke-width="1.2"/><text x="0.2" y="1.6" text-anchor="middle" font-family="Liberation Sans,sans-serif" font-size="10" fill="#a7b2b1">a</text></svg>
<svg class="b" style="left:928.8px;top:69.2px" width="20" height="20" viewBox="-10.0 -10.0 20 20" fill="none" stroke-linecap="round" stroke-linejoin="round"><rect x="-6.6" y="-6.6" width="13.2" height="13.2" rx="1.6" stroke="#a7b2b1" stroke-width="1.2"/><circle cx="3" cy="-3" r="1.5" stroke="#a7b2b1" stroke-width="1"/><path d="M-6.6 3L-3 -0.6L3.6 6M1 3.4L3.6 0.8L6.6 3.8" stroke="#a7b2b1" stroke-width="1.2"/><path d="M2.6 4.4L5.2 7M3.8 3.4L6.6 6.2" stroke="#a7b2b1" stroke-width="1.4"/></svg>
<svg class="b" style="left:956.8px;top:69.2px" width="20" height="20" viewBox="-10.0 -10.0 20 20" fill="none" stroke-linecap="round" stroke-linejoin="round"><rect x="-6.6" y="-6.6" width="13.2" height="13.2" rx="1.6" stroke="#a7b2b1" stroke-width="1.2"/><path d="M3 -3.6H-3L0.4 0L-3 3.6H3" stroke="#a7b2b1" stroke-width="1.2"/></svg>
<svg class="b" style="left:7.5px;top:103.5px" width="20" height="20" viewBox="-10.0 -10.0 20 20" fill="none" stroke-linecap="round" stroke-linejoin="round"><path d="M-6.2 -5V4.4A1.4 1.4 0 0 0 -4.8 5.8H-2.4M5.4 -0.4V-3.2A1.4 1.4 0 0 0 4 -4.6H0.6L-1.2 -6.6H-4.8A1.4 1.4 0 0 0 -6.2 -5.2" stroke="#9a7420" stroke-width="1.4"/><path d="M-6.2 -2.6H5.4" stroke="#9a7420" stroke-width="1.3"/><path d="M-5.6 -2V5.2H-2.6V-2Z" fill="#f0e0b8"/><circle cx="2" cy="2.6" r="3" stroke="#4f62d8" stroke-width="1.4" fill="#fff"/><path d="M4.2 4.8L7 7.6" stroke="#4f62d8" stroke-width="1.4"/></svg>
<svg class="b" style="left:286.2px;top:103.6px" width="20" height="20" viewBox="-10.0 -10.0 20 20" fill="none" stroke-linecap="round" stroke-linejoin="round"><path d="M-4.4 -4.2L4.5 4.3M-3.3 -0.1L-0.7 2M-1.1 2.2L-2.9 5.1" stroke="#435157" stroke-width="1.15"/><path d="M-0.2 -5.2L4.7 -2.1L2 -0.5Z" fill="#435157" stroke="#435157" stroke-width="0.6"/></svg>
<svg class="b" style="left:18.5px;top:139.8px" width="22" height="22" viewBox="-11.0 -11.0 22 22" fill="none" stroke-linecap="round" stroke-linejoin="round"><path d="M-6.2 -6A1.6 1.6 0 0 1 -4.6 -7.6H0.5L4.5 -3.6V5.9A1.6 1.6 0 0 1 2.9 7.5H-4.6A1.6 1.6 0 0 1 -6.2 5.9Z" fill="#d5dcfa" stroke="#4f62d8" stroke-width="1.3"/><path d="M0.5 -7.2V-3.8H4.2" stroke="#4f62d8" stroke-width="1.2"/><path d="M-3.4 2.5Q2 -3.4 7.4 2.5Q2 8.4 -3.4 2.5Z" fill="#fff"/><path d="M-2.5999999999999996 2.5Q2 -2.0999999999999996 6.6 2.5Q2 7.1 -2.5999999999999996 2.5Z" fill="#e9f3f2" stroke="#3f4a50" stroke-width="1"/><circle cx="2" cy="2.5" r="1.7" fill="#3f4a50"/></svg>
<svg class="b" style="left:47.2px;top:141.3px" width="20" height="20" viewBox="-10.0 -10.0 20 20" fill="none" stroke-linecap="round" stroke-linejoin="round"><path d="M-6.6 -1.2A6.7 6.7 0 0 1 5.2 -4.2" stroke="#435157" stroke-width="1.3"/><path d="M6.6 1.2A6.7 6.7 0 0 1 -5.2 4.2" stroke="#435157" stroke-width="1.3"/><path d="M6.6 -6.4L6.2 -2.2L2.2 -3.6Z" fill="#435157" stroke="#435157" stroke-width="0.8"/><path d="M-6.6 6.4L-6.2 2.2L-2.2 3.6Z" fill="#435157" stroke="#435157" stroke-width="0.8"/></svg>
<svg class="b" style="left:75.3px;top:141.3px" width="20" height="20" viewBox="-10.0 -10.0 20 20" fill="none" stroke-linecap="round" stroke-linejoin="round"><rect x="-3.6" y="-6.6" width="10.2" height="10.2" rx="2" fill="#dfe4fb" stroke="#6877dc" stroke-width="1.2"/><rect x="-6.6" y="-3.6" width="10.2" height="10.2" rx="2" fill="#e6eafc" stroke="#5566d8" stroke-width="1.2"/><path d="M-3.6 1.5H0.6" stroke="#5566d8" stroke-width="1.3"/></svg>
<svg class="b" style="left:18.4px;top:176.6px" width="20" height="20" viewBox="-10.0 -10.0 20 20" fill="none" stroke-linecap="round" stroke-linejoin="round"><circle cx="-1.6" cy="-1.6" r="4.3" stroke="#a9b5b5" stroke-width="1.2"/><path d="M1.6 1.6L5.6 5.6" stroke="#a9b5b5" stroke-width="1.2"/></svg>
<svg class="b" style="left:18.3px;top:215.2px" width="14" height="12" viewBox="-7.0 -6.0 14 12" fill="none" stroke-linecap="round" stroke-linejoin="round"><path d="M-4.8 -2.4L0 2.4L4.8 -2.4" stroke="#435157" stroke-width="1.3"/></svg>
<svg class="b" style="left:36.6px;top:210.9px" width="20" height="20" viewBox="-10.0 -10.0 20 20" fill="none" stroke-linecap="round" stroke-linejoin="round"><path d="M-6.9 -4.6V5.2A1.4 1.4 0 0 0 -5.5 6.6H5.5A1.4 1.4 0 0 0 6.9 5.2V-3A1.4 1.4 0 0 0 5.5 -4.4H0.2L-1.6 -6.4H-5.5A1.4 1.4 0 0 0 -6.9 -5Z" fill="#fff" stroke="#9a7420" stroke-width="1.3"/><path d="M-6.9 -1.6H6.9V5.2A1.4 1.4 0 0 1 5.5 6.6H-5.5A1.4 1.4 0 0 1 -6.9 5.2Z" fill="#f0e0b8" stroke="#9a7420" stroke-width="1.3"/></svg>
<svg class="b" style="left:40.6px;top:244.1px" width="12" height="14" viewBox="-6.0 -7.0 12 14" fill="none" stroke-linecap="round" stroke-linejoin="round"><path d="M-2.4 -4.8L2.4 0L-2.4 4.8" stroke="#435157" stroke-width="1.3"/></svg>
<svg class="b" style="left:59.0px;top:240.5px" width="20" height="20" viewBox="-10.0 -10.0 20 20" fill="none" stroke-linecap="round" stroke-linejoin="round"><path d="M-6.9 -4.6V5.2A1.4 1.4 0 0 0 -5.5 6.6H5.5A1.4 1.4 0 0 0 6.9 5.2V-3A1.4 1.4 0 0 0 5.5 -4.4H0.2L-1.6 -6.4H-5.5A1.4 1.4 0 0 0 -6.9 -5Z" fill="#fff" stroke="#9a7420" stroke-width="1.3"/><path d="M-6.9 -1.6H6.9V5.2A1.4 1.4 0 0 1 5.5 6.6H-5.5A1.4 1.4 0 0 1 -6.9 5.2Z" fill="#f0e0b8" stroke="#9a7420" stroke-width="1.3"/></svg>
<svg class="b" style="left:59.0px;top:270.0px" width="20" height="20" viewBox="-10.0 -10.0 20 20" fill="none" stroke-linecap="round" stroke-linejoin="round"><g transform="scale(0.93)"><path d="M-7 7.6H7" stroke="#9a7420" stroke-width="1.4"/><path d="M-5.8 7.4L-5.3 -2.4H-3.4L-2.9 7.4" stroke="#9a7420" stroke-width="1.25" fill="#fff"/><path d="M-1.4 7.4V0.6L0.5 2.2L2.3 0.6L4.1 2.2L6 0.6V7.4" stroke="#9a7420" stroke-width="1.25"/><path d="M0 4.6H1.2V6H0ZM1.8 4.6H3V6H1.8ZM3.6 4.6H4.8V6H3.6Z" fill="#aab4d8"/><path d="M-4.4 -4.2L-1.6 -6.4Q1.6 -8 2.4 -6.2Q2.8 -4.6 1 -4.4" stroke="#59646c" stroke-width="1.1"/></g></svg>
<svg class="b" style="left:59.0px;top:299.6px" width="20" height="20" viewBox="-10.0 -10.0 20 20" fill="none" stroke-linecap="round" stroke-linejoin="round"><g transform="scale(0.93)"><path d="M-7 7.6H7" stroke="#9a7420" stroke-width="1.4"/><path d="M-5.8 7.4L-5.3 -2.4H-3.4L-2.9 7.4" stroke="#9a7420" stroke-width="1.25" fill="#fff"/><path d="M-1.4 7.4V0.6L0.5 2.2L2.3 0.6L4.1 2.2L6 0.6V7.4" stroke="#9a7420" stroke-width="1.25"/><path d="M0 4.6H1.2V6H0ZM1.8 4.6H3V6H1.8ZM3.6 4.6H4.8V6H3.6Z" fill="#aab4d8"/><path d="M-4.4 -4.2L-1.6 -6.4Q1.6 -8 2.4 -6.2Q2.8 -4.6 1 -4.4" stroke="#59646c" stroke-width="1.1"/></g></svg>
<svg class="b" style="left:59.0px;top:329.4px" width="20" height="20" viewBox="-10.0 -10.0 20 20" fill="none" stroke-linecap="round" stroke-linejoin="round"><g transform="scale(0.93)"><path d="M-7 7.6H7" stroke="#9a7420" stroke-width="1.4"/><path d="M-5.8 7.4L-5.3 -2.4H-3.4L-2.9 7.4" stroke="#9a7420" stroke-width="1.25" fill="#fff"/><path d="M-1.4 7.4V0.6L0.5 2.2L2.3 0.6L4.1 2.2L6 0.6V7.4" stroke="#9a7420" stroke-width="1.25"/><path d="M0 4.6H1.2V6H0ZM1.8 4.6H3V6H1.8ZM3.6 4.6H4.8V6H3.6Z" fill="#aab4d8"/><path d="M-4.4 -4.2L-1.6 -6.4Q1.6 -8 2.4 -6.2Q2.8 -4.6 1 -4.4" stroke="#59646c" stroke-width="1.1"/></g></svg>
<svg class="b" style="left:59.0px;top:359.0px" width="20" height="20" viewBox="-10.0 -10.0 20 20" fill="none" stroke-linecap="round" stroke-linejoin="round"><g transform="scale(0.93)"><path d="M-7 7.6H7" stroke="#9a7420" stroke-width="1.4"/><path d="M-5.8 7.4L-5.3 -2.4H-3.4L-2.9 7.4" stroke="#9a7420" stroke-width="1.25" fill="#fff"/><path d="M-1.4 7.4V0.6L0.5 2.2L2.3 0.6L4.1 2.2L6 0.6V7.4" stroke="#9a7420" stroke-width="1.25"/><path d="M0 4.6H1.2V6H0ZM1.8 4.6H3V6H1.8ZM3.6 4.6H4.8V6H3.6Z" fill="#aab4d8"/><path d="M-4.4 -4.2L-1.6 -6.4Q1.6 -8 2.4 -6.2Q2.8 -4.6 1 -4.4" stroke="#59646c" stroke-width="1.1"/></g></svg>
<svg class="b" style="left:330.0px;top:99.8px" width="20" height="20" viewBox="-10.0 -10.0 20 20" fill="none" stroke-linecap="round" stroke-linejoin="round"><g transform="scale(0.93)"><path d="M-7 7.6H7" stroke="#9a7420" stroke-width="1.4"/><path d="M-5.8 7.4L-5.3 -2.4H-3.4L-2.9 7.4" stroke="#9a7420" stroke-width="1.25" fill="#fff"/><path d="M-1.4 7.4V0.6L0.5 2.2L2.3 0.6L4.1 2.2L6 0.6V7.4" stroke="#9a7420" stroke-width="1.25"/><path d="M0 4.6H1.2V6H0ZM1.8 4.6H3V6H1.8ZM3.6 4.6H4.8V6H3.6Z" fill="#aab4d8"/><path d="M-4.4 -4.2L-1.6 -6.4Q1.6 -8 2.4 -6.2Q2.8 -4.6 1 -4.4" stroke="#59646c" stroke-width="1.1"/></g></svg>
<svg class="b" style="left:477.2px;top:100.3px" width="20" height="20" viewBox="-10.0 -10.0 20 20" fill="none" stroke-linecap="round" stroke-linejoin="round"><path d="M-3.9 -3.9L3.9 3.9M3.9 -3.9L-3.9 3.9" stroke="#435157" stroke-width="1.15"/></svg>
<svg class="b" style="left:328.5px;top:135.4px" width="20" height="20" viewBox="-10.0 -10.0 20 20" fill="none" stroke-linecap="round" stroke-linejoin="round"><circle r="7.4" stroke="#4f62d8" stroke-width="1.2"/><text x="0" y="4.4" text-anchor="middle" font-family="Liberation Serif,serif" font-style="italic" font-weight="bold" font-size="13.5" fill="#4f62d8">i</text></svg>
<svg class="b" style="left:358.6px;top:135.6px" width="20" height="20" viewBox="-10.0 -10.0 20 20" fill="none" stroke-linecap="round" stroke-linejoin="round"><path d="M-4.6 -6.8V4.6L-1.8 2.2L0.4 6.8L2.8 5.6L0.8 1.2L4.6 1Z" fill="#fff" stroke="#435157" stroke-width="1.2"/></svg>
<svg class="b" style="left:633.3px;top:208.6px" width="20" height="20" viewBox="-10.0 -10.0 20 20" fill="none" stroke-linecap="round" stroke-linejoin="round"><path d="M-5 -7.3V5.2L-1.9 2.6L0.4 7.4L3 6.2L0.8 1.5L5 1.2Z" fill="#fff" stroke="#435157" stroke-width="1.15"/></svg>
<svg class="b" style="left:661.8px;top:208.6px" width="20" height="20" viewBox="-10.0 -10.0 20 20" fill="none" stroke-linecap="round" stroke-linejoin="round"><text x="0" y="-1.8" text-anchor="middle" font-family="Liberation Sans,sans-serif" font-size="9" fill="#b3bcbb">DC</text><path d="M-4.4 0.4H4.4L1 4V7.6L-1 6.6V4Z" stroke="#b9c1c0" stroke-width="1.1"/></svg>
<svg class="b" style="left:689.0px;top:208.6px" width="20" height="20" viewBox="-10.0 -10.0 20 20" fill="none" stroke-linecap="round" stroke-linejoin="round"><circle cx="-0.4" cy="-0.8" r="5" stroke="#c8353c" stroke-width="1.2"/><circle cx="-0.4" cy="-0.8" r="2.3" fill="#d02a2f"/><path d="M-6.4 -6.8L-5 -5.4M5.6 -6.8L4.2 -5.4M-6.4 5.2L-5 3.8" stroke="#435157" stroke-width="1"/><path d="M-0.9999999999999996 5Q3.6 0.40000000000000036 8.2 5Q3.6 9.6 -0.9999999999999996 5Z" fill="#e9f3f2" stroke="#4a555a" stroke-width="1"/><circle cx="3.6" cy="5" r="1.7" fill="#4a555a"/></svg>
<svg class="b" style="left:717.0px;top:208.6px" width="20" height="20" viewBox="-10.0 -10.0 20 20" fill="none" stroke-linecap="round" stroke-linejoin="round"><path d="M-4.6 6.6V2Q-4.6 0 -2.6 -1.6Q-0.4 -3.2 -0.4 -5.2V-7.2M-2.8 7V2.6Q-2.8 0.8 -0.8 -0.8Q1.4 -2.6 1.4 -4.6V-7.2M-1 7.4V3.2Q-1 1.6 1 0Q3.2 -1.8 3.2 -3.8V-7" stroke="#c8353c" stroke-width="1.1"/><path d="M0.0 5Q4.6 0.40000000000000036 9.2 5Q4.6 9.6 0.0 5Z" fill="#e9f3f2" stroke="#4a555a" stroke-width="1"/><circle cx="4.6" cy="5" r="1.7" fill="#4a555a"/></svg>
<svg class="b" style="left:745.0px;top:208.6px" width="20" height="20" viewBox="-10.0 -10.0 20 20" fill="none" stroke-linecap="round" stroke-linejoin="round"><path d="M1.4 5.8H-3.6L-6.8 -2.4L0 -7.4L6.8 -2.4L6 0" stroke="#4f62d8" stroke-width="1.3"/><path d="M-0.39999999999999947 5Q4.2 0.40000000000000036 8.8 5Q4.2 9.6 -0.39999999999999947 5Z" fill="#e9f3f2" stroke="#4a555a" stroke-width="1"/><circle cx="4.2" cy="5" r="1.7" fill="#4a555a"/></svg>
<svg class="b" style="left:773.0px;top:208.6px" width="20" height="20" viewBox="-10.0 -10.0 20 20" fill="none" stroke-linecap="round" stroke-linejoin="round"><path d="M-3.8 3.6A5.4 5.4 0 1 1 5.4 -0.6M0 -7.4V1M-7.6 -0.6H7.4" stroke="#4f62d8" stroke-width="1.2"/><path d="M-1.3999999999999995 5Q3.2 0.40000000000000036 7.8 5Q3.2 9.6 -1.3999999999999995 5Z" fill="#e9f3f2" stroke="#4a555a" stroke-width="1"/><circle cx="3.2" cy="5" r="1.7" fill="#4a555a"/></svg>
<svg class="b" style="left:801.0px;top:208.6px" width="20" height="20" viewBox="-10.0 -10.0 20 20" fill="none" stroke-linecap="round" stroke-linejoin="round"><path d="M-6 -5.6H4.6V0M-6 -5.6V4.6H-2" fill="none" stroke="#4f62d8" stroke-width="1.3"/><path d="M-6 -5.6H4.6V1.6H-1V4.6H-6Z" fill="#b9d2ee"/><path d="M-6 -5.6H4.6V0M-6 -5.6V4.6H-2" stroke="#4f62d8" stroke-width="1.3"/><circle cx="-6" cy="-5.6" r="1.5" fill="#dfe8fb" stroke="#4f62d8" stroke-width="1"/><circle cx="4.6" cy="-5.6" r="1.5" fill="#dfe8fb" stroke="#4f62d8" stroke-width="1"/><circle cx="-6" cy="4.6" r="1.5" fill="#dfe8fb" stroke="#4f62d8" stroke-width="1"/><path d="M-1.5999999999999996 5Q3 0.40000000000000036 7.6 5Q3 9.6 -1.5999999999999996 5Z" fill="#e9f3f2" stroke="#4a555a" stroke-width="1"/><circle cx="3" cy="5" r="1.7" fill="#4a555a"/></svg>
<svg class="b" style="left:829.8px;top:208.7px" width="20" height="20" viewBox="-10.0 -10.0 20 20" fill="none" stroke-linecap="round" stroke-linejoin="round"><circle r="6.2" stroke="#4f62d8" stroke-width="1.1"/><circle r="3.6" stroke="#c0272d" stroke-width="2.3"/><path d="M-4.4 -4.4L-6.2 -6.2" stroke="#4f62d8" stroke-width="1.1"/><circle cx="-6.8" cy="-6.8" r="1.3" stroke="#4f62d8" stroke-width="1" fill="#fff"/><path d="M-4.4 4.4L-6.2 6.2" stroke="#4f62d8" stroke-width="1.1"/><circle cx="-6.8" cy="6.8" r="1.3" stroke="#4f62d8" stroke-width="1" fill="#fff"/><path d="M4.4 -4.4L6.2 -6.2" stroke="#4f62d8" stroke-width="1.1"/><circle cx="6.8" cy="-6.8" r="1.3" stroke="#4f62d8" stroke-width="1" fill="#fff"/><path d="M4.4 4.4L6.2 6.2" stroke="#4f62d8" stroke-width="1.1"/><circle cx="6.8" cy="6.8" r="1.3" stroke="#4f62d8" stroke-width="1" fill="#fff"/></svg>
<svg class="b" style="left:867.6px;top:208.7px" width="20" height="20" viewBox="-10.0 -10.0 20 20" fill="none" stroke-linecap="round" stroke-linejoin="round"><circle r="7.6" stroke="#4f62d8" stroke-width="1.2"/><path d="M3.59 0.63L-0.66 7.57" stroke="#4f62d8" stroke-width="1.1"/><path d="M1.25 3.43L-6.89 3.21" stroke="#4f62d8" stroke-width="1.1"/><path d="M-2.34 2.79L-6.23 -4.36" stroke="#4f62d8" stroke-width="1.1"/><path d="M-3.59 -0.63L0.66 -7.57" stroke="#4f62d8" stroke-width="1.1"/><path d="M-1.25 -3.43L6.89 -3.21" stroke="#4f62d8" stroke-width="1.1"/><path d="M2.34 -2.79L6.23 4.36" stroke="#4f62d8" stroke-width="1.1"/><circle r="3.65" stroke="#4f62d8" stroke-width="1.1"/></svg>
<svg class="b" style="left:896.0px;top:208.7px" width="20" height="20" viewBox="-10.0 -10.0 20 20" fill="none" stroke-linecap="round" stroke-linejoin="round"><circle cx="-3.6" cy="0.2" r="2.6" stroke="#a9b3b2" stroke-width="1.1"/><path d="M2.2 -7V4.4L4 6.8L5.8 4.4V-7M2.2 -3L5.8 -1.4M2.2 0L5.8 1.6M2.2 3L5.8 4.6" stroke="#a9b3b2" stroke-width="1.1"/></svg>
<svg class="b" style="left:924.5px;top:208.4px" width="20" height="20" viewBox="-10.0 -10.0 20 20" fill="none" stroke-linecap="round" stroke-linejoin="round"><rect x="-6.4" y="-6.8" width="13.6" height="13.6" stroke="#59646c" stroke-width="1" stroke-dasharray="1 1.2" stroke-linecap="butt"/><path d="M-6.4 0H-3M3.4 0H7M0.4 -6.8V-4M0.4 3.4V6.8" stroke="#59646c" stroke-width="1" stroke-dasharray="1 1.2" stroke-linecap="butt"/><path d="M-7.4 7L7.2 -7.4" stroke="#4f62d8" stroke-width="1.3"/></svg>
<svg class="b" style="left:1235.8px;top:183.5px" width="12" height="10" viewBox="-6.0 -5.0 12 10" fill="none" stroke-linecap="round" stroke-linejoin="round"><path d="M-3.9 2.2L0 -2.2L3.9 2.2Z" fill="#505050"/></svg>
<svg class="b" style="left:1235.8px;top:731.2px" width="12" height="10" viewBox="-6.0 -5.0 12 10" fill="none" stroke-linecap="round" stroke-linejoin="round"><path d="M-3.9 -2.2L0 2.2L3.9 -2.2Z" fill="#505050"/></svg>
<svg class="b" style="left:340.5px;top:743.0px" width="10" height="12" viewBox="-5.0 -6.0 10 12" fill="none" stroke-linecap="round" stroke-linejoin="round"><path d="M2.2 -3.9L-2.2 0L2.2 3.9Z" fill="#505050"/></svg>
<svg class="b" style="left:1224.4px;top:743.0px" width="10" height="12" viewBox="-5.0 -6.0 10 12" fill="none" stroke-linecap="round" stroke-linejoin="round"><path d="M-2.2 -3.9L2.2 0L-2.2 3.9Z" fill="#505050"/></svg>
<svg class="b" style="left:1234.9px;top:742.0px" width="14" height="14" viewBox="-7.0 -7.0 14 14" fill="none" stroke-linecap="round" stroke-linejoin="round"><circle r="5.6" fill="#fff" stroke="#dbe3e2" stroke-width="0.9"/></svg>
<svg class="b" style="left:1256.0px;top:103.5px" width="20" height="20" viewBox="-10.0 -10.0 20 20" fill="none" stroke-linecap="round" stroke-linejoin="round"><path d="M-7 -5V4.2A1.4 1.4 0 0 0 -5.6 5.6H3.8V-3.6A1.4 1.4 0 0 0 2.4 -5H-0.6L-2.2 -6.8H-5.6A1.4 1.4 0 0 0 -7 -5.4Z" fill="#f0e0b8" stroke="#9a7420" stroke-width="1.3"/><path d="M-7 -2.6H3.8" stroke="#9a7420" stroke-width="1.2"/><rect x="-1.4" y="-1" width="8.6" height="9" rx="1.6" fill="#3aa14c" stroke="#2b8f3e" stroke-width="1"/><path d="M0.8 1.4H2.6V5.6H0.8ZM4 1.4H5V5.6H4Z" fill="#e6f4e8"/></svg>
<svg class="b" style="left:1488.3px;top:103.5px" width="20" height="20" viewBox="-10.0 -10.0 20 20" fill="none" stroke-linecap="round" stroke-linejoin="round"><path d="M-4.4 -4.2L4.5 4.3M-3.3 -0.1L-0.7 2M-1.1 2.2L-2.9 5.1" stroke="#435157" stroke-width="1.15"/><path d="M-0.2 -5.2L4.7 -2.1L2 -0.5Z" fill="#435157" stroke="#435157" stroke-width="0.6"/></svg>
<svg class="b" style="left:1516.2px;top:104.0px" width="20" height="20" viewBox="-10.0 -10.0 20 20" fill="none" stroke-linecap="round" stroke-linejoin="round"><path d="M-3.9 -3.9L3.9 3.9M3.9 -3.9L-3.9 3.9" stroke="#435157" stroke-width="1.15"/></svg>
<svg class="b" style="left:1267.3px;top:141.3px" width="20" height="20" viewBox="-10.0 -10.0 20 20" fill="none" stroke-linecap="round" stroke-linejoin="round"><path d="M-6.6 -1.2A6.7 6.7 0 0 1 5.2 -4.2" stroke="#435157" stroke-width="1.3"/><path d="M6.6 1.2A6.7 6.7 0 0 1 -5.2 4.2" stroke="#435157" stroke-width="1.3"/><path d="M6.6 -6.4L6.2 -2.2L2.2 -3.6Z" fill="#435157" stroke="#435157" stroke-width="0.8"/><path d="M-6.6 6.4L-6.2 2.2L-2.2 3.6Z" fill="#435157" stroke="#435157" stroke-width="0.8"/></svg>
<svg class="b" style="left:1295.3px;top:141.3px" width="20" height="20" viewBox="-10.0 -10.0 20 20" fill="none" stroke-linecap="round" stroke-linejoin="round"><rect x="-3.6" y="-6.6" width="10.2" height="10.2" rx="2" fill="#dfe4fb" stroke="#6877dc" stroke-width="1.2"/><rect x="-6.6" y="-3.6" width="10.2" height="10.2" rx="2" fill="#e6eafc" stroke="#5566d8" stroke-width="1.2"/><path d="M-3.6 1.5H0.6" stroke="#5566d8" stroke-width="1.3"/></svg>
<svg class="b" style="left:1268.6px;top:170.8px" width="20" height="20" viewBox="-10.0 -10.0 20 20" fill="none" stroke-linecap="round" stroke-linejoin="round"><circle r="7.4" stroke="#4f62d8" stroke-width="1.2"/><path d="M3.50 0.62L-0.64 7.37" stroke="#4f62d8" stroke-width="1.1"/><path d="M1.21 3.34L-6.71 3.13" stroke="#4f62d8" stroke-width="1.1"/><path d="M-2.28 2.72L-6.06 -4.24" stroke="#4f62d8" stroke-width="1.1"/><path d="M-3.50 -0.62L0.64 -7.37" stroke="#4f62d8" stroke-width="1.1"/><path d="M-1.21 -3.34L6.71 -3.13" stroke="#4f62d8" stroke-width="1.1"/><path d="M2.28 -2.72L6.06 4.24" stroke="#4f62d8" stroke-width="1.1"/><circle r="3.55" stroke="#4f62d8" stroke-width="1.1"/></svg>
<svg class="b" style="left:1375.8px;top:171.0px" width="20" height="20" viewBox="-10.0 -10.0 20 20" fill="none" stroke-linecap="round" stroke-linejoin="round"><path d="M0 -4.6L1.2 -8L4.6 -5.2L3.2 -3.4Z" fill="#4f62d8" transform="rotate(0)"/><path d="M0 -4.6L1.2 -8L4.6 -5.2L3.2 -3.4Z" fill="#4f62d8" transform="rotate(45)"/><path d="M0 -4.6L1.2 -8L4.6 -5.2L3.2 -3.4Z" fill="#4f62d8" transform="rotate(90)"/><path d="M0 -4.6L1.2 -8L4.6 -5.2L3.2 -3.4Z" fill="#4f62d8" transform="rotate(135)"/><path d="M0 -4.6L1.2 -8L4.6 -5.2L3.2 -3.4Z" fill="#4f62d8" transform="rotate(180)"/><path d="M0 -4.6L1.2 -8L4.6 -5.2L3.2 -3.4Z" fill="#4f62d8" transform="rotate(225)"/><path d="M0 -4.6L1.2 -8L4.6 -5.2L3.2 -3.4Z" fill="#4f62d8" transform="rotate(270)"/><path d="M0 -4.6L1.2 -8L4.6 -5.2L3.2 -3.4Z" fill="#4f62d8" transform="rotate(315)"/><circle r="5" fill="#4f62d8"/><circle r="3.1" fill="#fff"/><circle r="1.9" fill="none" stroke="#4f62d8" stroke-width="1"/></svg>
<svg class="b" style="left:1516.0px;top:177.5px" width="12" height="8" viewBox="-6.0 -4.0 12 8" fill="none" stroke-linecap="round" stroke-linejoin="round"><circle cx="-3.2" cy="0" r="1.2" fill="#435157"/><circle cx="0" cy="0" r="1.2" fill="#435157"/><circle cx="3.2" cy="0" r="1.2" fill="#435157"/></svg>
<svg class="b" style="left:1266.8px;top:207.8px" width="20" height="20" viewBox="-10.0 -10.0 20 20" fill="none" stroke-linecap="round" stroke-linejoin="round"><circle cx="-1.6" cy="-1.6" r="4.3" stroke="#a9b5b5" stroke-width="1.2"/><path d="M1.6 1.6L5.6 5.6" stroke="#a9b5b5" stroke-width="1.2"/></svg>
<svg class="b" style="left:1310.6px;top:243.6px" width="10" height="14" viewBox="-5.0 -7.0 10 14" fill="none" stroke-linecap="round" stroke-linejoin="round"><path d="M0 4.6V-4.6M-3 -1.6L0 -4.6L3 -1.6" stroke="#8a9696" stroke-width="1.1"/></svg>
<svg class="b" style="left:1522.5px;top:268.0px" width="12" height="10" viewBox="-6.0 -5.0 12 10" fill="none" stroke-linecap="round" stroke-linejoin="round"><path d="M-3.9 2.2L0 -2.2L3.9 2.2Z" fill="#505050"/></svg>
<svg class="b" style="left:1522.5px;top:286.5px" width="12" height="10" viewBox="-6.0 -5.0 12 10" fill="none" stroke-linecap="round" stroke-linejoin="round"><path d="M-3.9 -2.2L0 2.2L3.9 -2.2Z" fill="#505050"/></svg>
<svg class="b" style="left:1263.0px;top:299.5px" width="10" height="12" viewBox="-5.0 -6.0 10 12" fill="none" stroke-linecap="round" stroke-linejoin="round"><path d="M2.2 -3.9L-2.2 0L2.2 3.9Z" fill="#505050"/></svg>
<svg class="b" style="left:1512.0px;top:299.5px" width="10" height="12" viewBox="-5.0 -6.0 10 12" fill="none" stroke-linecap="round" stroke-linejoin="round"><path d="M-2.2 -3.9L2.2 0L-2.2 3.9Z" fill="#505050"/></svg>
<svg class="b" style="left:1392.6px;top:314.4px" width="12" height="10" viewBox="-6.0 -5.0 12 10" fill="none" stroke-linecap="round" stroke-linejoin="round"><path d="M-4.5 -1.8L0 1.8L4.5 -1.8" stroke="#4a585d" stroke-width="1.1"/></svg>
<svg class="b" style="left:1261.3px;top:407.0px" width="12" height="14" viewBox="-6.0 -7.0 12 14" fill="none" stroke-linecap="round" stroke-linejoin="round"><path d="M2.4 -5L-2.4 0L2.4 5" stroke="#435157" stroke-width="1.3"/></svg>
<svg class="b" style="left:1524.3px;top:407.0px" width="12" height="14" viewBox="-6.0 -7.0 12 14" fill="none" stroke-linecap="round" stroke-linejoin="round"><path d="M-2.4 -5L2.4 0L-2.4 5" stroke="#435157" stroke-width="1.3"/></svg>
<svg class="b" style="left:1283.8px;top:403.6px" width="20" height="20" viewBox="-10.0 -10.0 20 20" fill="none" stroke-linecap="round" stroke-linejoin="round"><path d="M0 -7.4L7.2 -2.2L4.4 6.2H-4.4L-7.2 -2.2Z" stroke="#c8353c" stroke-width="1.2"/><path d="M-3.4 -1.8H3.4M0 -1.8V1M-3.2 4.2Q0 -1 3.2 4.2" stroke="#c8353c" stroke-width="1.2"/></svg>
<svg class="b" style="left:1390.5px;top:403.5px" width="20" height="20" viewBox="-10.0 -10.0 20 20" fill="none" stroke-linecap="round" stroke-linejoin="round"><path d="M-7 -5V4.2A1.4 1.4 0 0 0 -5.6 5.6H3.8V-3.6A1.4 1.4 0 0 0 2.4 -5H-0.6L-2.2 -6.8H-5.6A1.4 1.4 0 0 0 -7 -5.4Z" fill="#f0e0b8" stroke="#9a7420" stroke-width="1.3"/><path d="M-7 -2.6H3.8" stroke="#9a7420" stroke-width="1.2"/><rect x="-1.4" y="-1" width="8.6" height="9" rx="1.6" fill="#3aa14c" stroke="#2b8f3e" stroke-width="1"/><path d="M0.8 1.4H2.6V5.6H0.8ZM4 1.4H5V5.6H4Z" fill="#e6f4e8"/></svg>
<svg class="b" style="left:1256.0px;top:437.8px" width="20" height="20" viewBox="-10.0 -10.0 20 20" fill="none" stroke-linecap="round" stroke-linejoin="round"><path d="M-6.6 3.2L-1.6 0.8L6.6 2L1.8 6.8L-4.4 6.4Z" fill="#bfe3c6" stroke="#2f9e44" stroke-width="1.2"/><path d="M-6.6 -0.6L-1.6 -3L6.6 -1.8L1.8 3L-4.4 2.6Z" fill="#cfd6fa" stroke="#5566d8" stroke-width="1.2"/><path d="M-6.6 -4.4L-1.6 -6.8L6.6 -5.6L1.8 -0.8L-4.4 -1.2Z" fill="#f6c9cb" stroke="#d9454b" stroke-width="1.2"/></svg>
<svg class="b" style="left:1488.3px;top:437.0px" width="20" height="20" viewBox="-10.0 -10.0 20 20" fill="none" stroke-linecap="round" stroke-linejoin="round"><path d="M-4.4 -4.2L4.5 4.3M-3.3 -0.1L-0.7 2M-1.1 2.2L-2.9 5.1" stroke="#435157" stroke-width="1.15"/><path d="M-0.2 -5.2L4.7 -2.1L2 -0.5Z" fill="#435157" stroke="#435157" stroke-width="0.6"/></svg>
<svg class="b" style="left:1516.2px;top:437.5px" width="20" height="20" viewBox="-10.0 -10.0 20 20" fill="none" stroke-linecap="round" stroke-linejoin="round"><path d="M-3.9 -3.9L3.9 3.9M3.9 -3.9L-3.9 3.9" stroke="#435157" stroke-width="1.15"/></svg>
<svg class="b" style="left:1269.0px;top:510.6px" width="14" height="12" viewBox="-7.0 -6.0 14 12" fill="none" stroke-linecap="round" stroke-linejoin="round"><path d="M-4.4 -2.2L0 2.2L4.4 -2.2" stroke="#435157" stroke-width="1.3"/></svg>
<svg class="b" style="left:1521.8px;top:502.0px" width="12" height="10" viewBox="-6.0 -5.0 12 10" fill="none" stroke-linecap="round" stroke-linejoin="round"><path d="M-3.9 2.2L0 -2.2L3.9 2.2Z" fill="#505050"/></svg>
<svg class="b" style="left:1521.8px;top:715.0px" width="12" height="10" viewBox="-6.0 -5.0 12 10" fill="none" stroke-linecap="round" stroke-linejoin="round"><path d="M-3.9 -2.2L0 2.2L3.9 -2.2Z" fill="#505050"/></svg>
<svg class="b" style="left:1268.8px;top:735.0px" width="20" height="20" viewBox="-10.0 -10.0 20 20" fill="none" stroke-linecap="round" stroke-linejoin="round"><path d="M-7 -5H7M-7 0H7M-7 5H7" stroke="#8a9494" stroke-width="1.3"/><circle cx="-2.6" cy="-5" r="2.1" fill="#e8ebfb" stroke="#4f62d8" stroke-width="1.2"/><circle cx="2.5" cy="0" r="2.1" fill="#e8ebfb" stroke="#4f62d8" stroke-width="1.2"/><circle cx="-2.6" cy="5" r="2.1" fill="#e8ebfb" stroke="#4f62d8" stroke-width="1.2"/></svg>
<svg class="b" style="left:1366.4px;top:735.8px" width="20" height="20" viewBox="-10.0 -10.0 20 20" fill="none" stroke-linecap="round" stroke-linejoin="round"><path d="M-6.6 3.2L-1.6 0.8L6.6 2L1.8 6.8L-4.4 6.4Z" fill="#bfe3c6" stroke="#2f9e44" stroke-width="1.2"/><path d="M-6.6 -0.6L-1.6 -3L6.6 -1.8L1.8 3L-4.4 2.6Z" fill="#cfd6fa" stroke="#5566d8" stroke-width="1.2"/><path d="M-6.6 -4.4L-1.6 -6.8L6.6 -5.6L1.8 -0.8L-4.4 -1.2Z" fill="#f6c9cb" stroke="#d9454b" stroke-width="1.2"/></svg>
<svg class="b" style="left:22.5px;top:762.5px" width="22" height="22" viewBox="-11.0 -11.0 22 22" fill="none" stroke-linecap="round" stroke-linejoin="round"><rect x="-6.5" y="-5.9" width="12.9" height="11.8" rx="2" stroke="#7480de" stroke-width="1.3" fill="#fff"/><path d="M-6.5 -2.5H6.4" stroke="#7480de" stroke-width="1.3"/><path d="M3 -0.4H9.4V8.2H3Z" fill="#fff"/><path d="M6.6 0.2L3.2 4.4H5.4L4 7.8L8.2 3.2H5.8L7.6 0.2Z" fill="#7a4a08"/></svg>
<svg class="b" style="left:125.4px;top:762.5px" width="22" height="22" viewBox="-11.0 -11.0 22 22" fill="none" stroke-linecap="round" stroke-linejoin="round"><rect x="-6.9" y="-5.9" width="13.6" height="11.8" rx="2" stroke="#7480de" stroke-width="1.3" fill="#fff"/><path d="M-6.9 -2.5H6.7" stroke="#7480de" stroke-width="1.3"/><path d="M6.7 -1.8V7" stroke="#fff" stroke-width="3.4" stroke-linecap="butt"/><path d="M6.7 -0.8V3.8M6.7 6.2V6.4" stroke="#c9282d" stroke-width="1.8"/></svg>
<svg class="b" style="left:142.4px;top:805.2px" width="12" height="10" viewBox="-6.0 -5.0 12 10" fill="none" stroke-linecap="round" stroke-linejoin="round"><path d="M-3.3 -1.7L0 1.7L3.3 -1.7" stroke="#435157" stroke-width="1.3"/></svg>
<svg class="b" style="left:393.6px;top:805.2px" width="12" height="10" viewBox="-6.0 -5.0 12 10" fill="none" stroke-linecap="round" stroke-linejoin="round"><path d="M-3.3 -1.7L0 1.7L3.3 -1.7" stroke="#435157" stroke-width="1.3"/></svg>
<svg class="b" style="left:1512.8px;top:805.4px" width="12" height="10" viewBox="-6.0 -5.0 12 10" fill="none" stroke-linecap="round" stroke-linejoin="round"><path d="M-4.0 -2.1L0 2.1L4.0 -2.1" stroke="#435157" stroke-width="1.3"/></svg>
<svg class="b" style="left:1418.5px;top:799.3px" width="20" height="20" viewBox="-10.0 -10.0 20 20" fill="none" stroke-linecap="round" stroke-linejoin="round"><path d="M-6 -6L-2.2 -2.2M-2 -5.4V-2H-5.4M6 -6L2.2 -2.2M2 -5.4V-2H5.4M-6 6L-2.2 2.2M-2 5.4V2H-5.4M6 6L2.2 2.2M2 5.4V2H5.4" stroke="#4159d8" stroke-width="1.15"/></svg>
</body></html>
